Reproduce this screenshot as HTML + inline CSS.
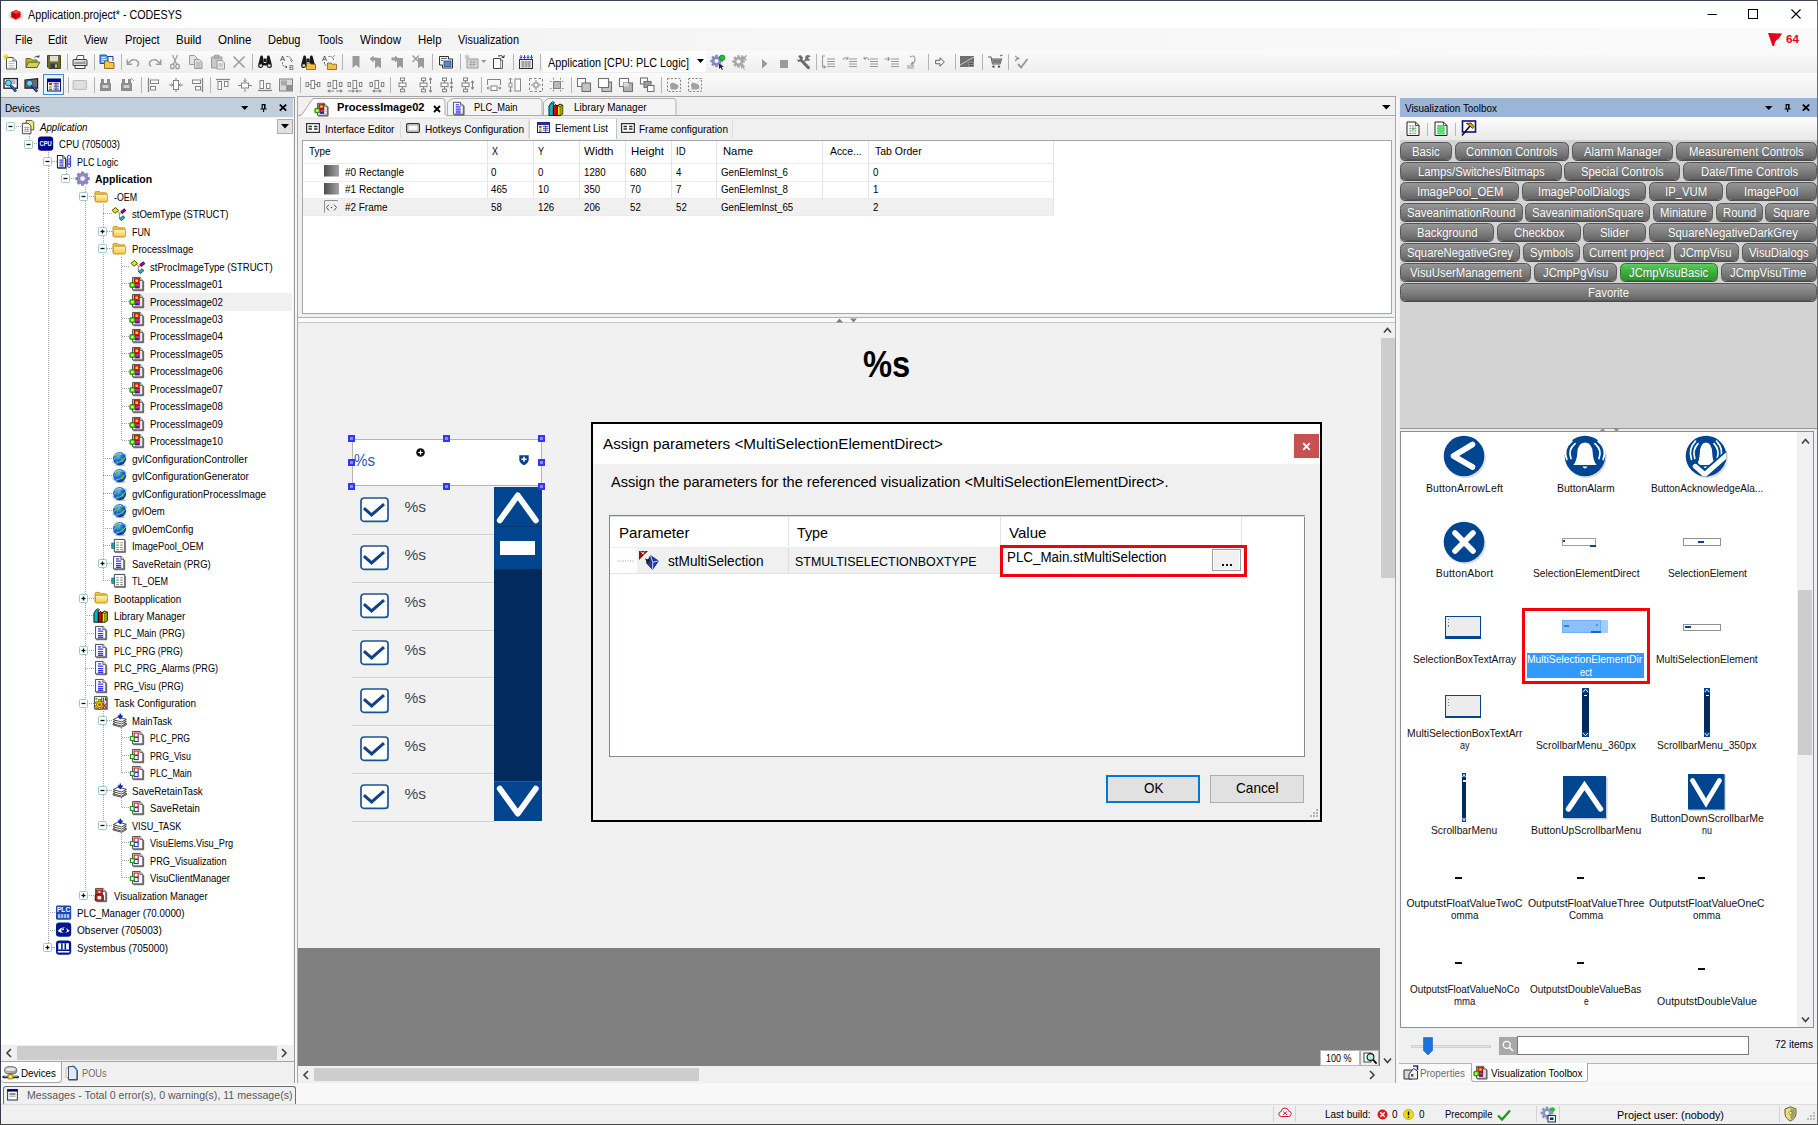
<!DOCTYPE html>
<html><head><meta charset="utf-8"><title>CODESYS</title>
<style>
html,body{margin:0;padding:0;}
body{width:1818px;height:1125px;overflow:hidden;background:#f6f6f6;position:relative;font-family:"Liberation Sans",sans-serif;}
div,span.t,svg{position:absolute;}
span.t{white-space:pre;transform-origin:0 50%;}
svg{overflow:visible;}
</style></head><body>
<div style="left:0px;top:0px;width:1818px;height:28px;background:#ffffff;"></div>
<svg style="left:8px;top:7px;" width="16" height="15" viewBox="0 0 16 15"><ellipse cx="8" cy="8.5" rx="7.5" ry="5" fill="#d9d9d9"/><path d="M8 3 L12.5 5 L12.5 10 L8 12.5 L3.5 10 L3.5 5 Z" fill="#d6000f"/><path d="M8 3 L12.5 5 L8 7 L3.5 5 Z" fill="#f04048"/><path d="M8 7 L8 12.5 L3.5 10 L3.5 5 Z" fill="#b4000c"/></svg>
<span class="t" style="left:27.50px;top:8px;font-size:12.5px;line-height:14px;color:#000;transform:scaleX(0.8591);">Application.project* - CODESYS</span>
<svg style="left:1707px;top:8.5px;" width="12" height="12" viewBox="0 0 12 12"><path d="M0.6 5.5 H9.8" stroke="#000" stroke-width="1" fill="none"/></svg>
<svg style="left:1748.4px;top:8.8px;" width="12" height="12" viewBox="0 0 12 12"><rect x="0.5" y="0.5" width="9" height="9" stroke="#000" stroke-width="1" fill="none"/></svg>
<svg style="left:1791px;top:8.8px;" width="12" height="12" viewBox="0 0 12 12"><path d="M0.5 0.5 L9.5 9.5 M9.5 0.5 L0.5 9.5" stroke="#000" stroke-width="1.1" fill="none"/></svg>
<div style="left:1px;top:28.2px;width:1816px;height:22.6px;background:linear-gradient(to right,#f0f0f0,#f5f5f5 35%,#fafafa);"></div>
<span class="t" style="left:14.50px;top:33px;font-size:12px;line-height:14px;color:#000;transform:scaleX(0.9050);">File</span>
<span class="t" style="left:48.00px;top:33px;font-size:12px;line-height:14px;color:#000;transform:scaleX(0.9188);">Edit</span>
<span class="t" style="left:84.00px;top:33px;font-size:12px;line-height:14px;color:#000;transform:scaleX(0.9111);">View</span>
<span class="t" style="left:124.50px;top:33px;font-size:12px;line-height:14px;color:#000;transform:scaleX(0.9237);">Project</span>
<span class="t" style="left:176.00px;top:33px;font-size:12px;line-height:14px;color:#000;transform:scaleX(0.9556);">Build</span>
<span class="t" style="left:218.00px;top:33px;font-size:12px;line-height:14px;color:#000;transform:scaleX(0.9657);">Online</span>
<span class="t" style="left:268.00px;top:33px;font-size:12px;line-height:14px;color:#000;transform:scaleX(0.9191);">Debug</span>
<span class="t" style="left:318.00px;top:33px;font-size:12px;line-height:14px;color:#000;transform:scaleX(0.8924);">Tools</span>
<span class="t" style="left:360.00px;top:33px;font-size:12px;line-height:14px;color:#000;transform:scaleX(0.9606);">Window</span>
<span class="t" style="left:417.50px;top:33px;font-size:12px;line-height:14px;color:#000;transform:scaleX(0.9522);">Help</span>
<span class="t" style="left:458.00px;top:33px;font-size:12px;line-height:14px;color:#000;transform:scaleX(0.9083);">Visualization</span>
<svg style="left:1767px;top:32px;" width="16" height="15" viewBox="0 0 16 15"><path d="M1 1 L15 1.5 L11.5 7 Q8 8 7 14 L5.5 14 Z" fill="#e8001c"/></svg>
<span class="t" style="left:1786.00px;top:33px;font-size:10.5px;line-height:12px;color:#e8001c;font-weight:700;transform:scaleX(1.1131);">64</span>
<div style="left:1px;top:50.8px;width:1816px;height:22.6px;background:linear-gradient(#fbfbfb,#eeeeee);"></div>
<div style="left:1px;top:73.4px;width:1816px;height:22.6px;background:linear-gradient(#fbfbfb,#efefef);"></div>
<div style="left:1px;top:96px;width:1816px;height:1px;background:#f0f0f0;"></div>
<div style="left:1px;top:97px;width:293px;height:988px;background:#f0f0f0;"></div>
<div style="left:1px;top:97.7px;width:292px;height:19.7px;background:#c1cfdd;"></div>
<span class="t" style="left:5.00px;top:102px;font-size:11px;line-height:12px;color:#000;transform:scaleX(0.8946);">Devices</span>
<div style="left:1px;top:118px;width:292px;height:927px;background:#ffffff;"></div>
<div style="left:293.6px;top:97px;width:1.2px;height:986px;background:#9c9c9c;"></div>
<div style="left:1px;top:97px;width:294px;height:1px;background:#a0a0a0;"></div>
<div style="left:297px;top:96.4px;width:1099px;height:987px;background:#f0f0f0;border:1px solid #a6a6a6;box-sizing:border-box;"></div>
<div style="left:1399.4px;top:97px;width:419px;height:986px;background:#f0f0f0;"></div>
<div style="left:1399.7px;top:97.6px;width:418px;height:19.4px;background:#9ab5d5;"></div>
<span class="t" style="left:1404.50px;top:102px;font-size:11px;line-height:12px;color:#000;transform:scaleX(0.8990);">Visualization Toolbox</span>
<div style="left:1px;top:1083.5px;width:1816px;height:20.8px;background:#f8f8f8;"></div>
<div style="left:1px;top:1104.3px;width:1816px;height:20.7px;background:#f0f0f0;"></div>
<svg style="left:0px;top:0px;" width="294" height="1000" viewBox="0 0 294 1000"><path d="M16.0 126.5 L21.0 126.5 M34.0 143.5 L39.0 143.5 M52.0 161.5 L57.0 161.5 M71.0 178.5 L75.0 178.5 M89.0 196.5 L94.0 196.5 M103.0 213.5 L112.0 213.5 M107.0 231.5 L112.0 231.5 M107.0 248.5 L112.0 248.5 M122.0 266.5 L130.0 266.5 M122.0 283.5 L130.0 283.5 M122.0 301.5 L130.0 301.5 M122.0 318.5 L130.0 318.5 M122.0 336.5 L130.0 336.5 M122.0 353.5 L130.0 353.5 M122.0 371.5 L130.0 371.5 M122.0 388.5 L130.0 388.5 M122.0 406.5 L130.0 406.5 M122.0 423.5 L130.0 423.5 M122.0 440.5 L130.0 440.5 M103.0 458.5 L112.0 458.5 M103.0 475.5 L112.0 475.5 M103.0 493.5 L112.0 493.5 M103.0 510.5 L112.0 510.5 M103.0 528.5 L112.0 528.5 M103.0 545.5 L112.0 545.5 M107.0 563.5 L112.0 563.5 M103.0 580.5 L112.0 580.5 M89.0 598.5 L94.0 598.5 M85.0 615.5 L94.0 615.5 M85.0 633.5 L94.0 633.5 M89.0 650.5 L94.0 650.5 M85.0 668.5 L94.0 668.5 M85.0 685.5 L94.0 685.5 M89.0 703.5 L94.0 703.5 M107.0 720.5 L112.0 720.5 M122.0 737.5 L130.0 737.5 M122.0 755.5 L130.0 755.5 M122.0 772.5 L130.0 772.5 M107.0 790.5 L112.0 790.5 M122.0 807.5 L130.0 807.5 M107.0 825.5 L112.0 825.5 M122.0 842.5 L130.0 842.5 M122.0 860.5 L130.0 860.5 M122.0 877.5 L130.0 877.5 M89.0 895.5 L94.0 895.5 M48.0 912.5 L57.0 912.5 M48.0 930.5 L57.0 930.5 M52.0 947.5 L57.0 947.5 M29.5 134.0 L29.5 144.0 M48.5 152.0 L48.5 948.0 M66.5 169.0 L66.5 179.0 M85.5 187.0 L85.5 895.0 M103.5 204.0 L103.5 581.0 M121.5 257.0 L121.5 441.0 M103.5 711.0 L103.5 825.0 M121.5 728.0 L121.5 773.0 M121.5 798.0 L121.5 808.0 M121.5 833.0 L121.5 878.0 " stroke="#a4a4a4" stroke-width="1" stroke-dasharray="1 1" fill="none"/></svg>
<svg style="left:6.0px;top:122.0px;" width="9" height="9" viewBox="0 0 9 9"><rect x="0.5" y="0.5" width="8" height="8" rx="1" fill="#fff" stroke="#9cc8cc" stroke-width="1"/><path d="M2.5 4.5 H6.5" stroke="#101010" stroke-width="1.3"/></svg>
<svg style="left:19.6px;top:118.7px;" width="15.2" height="15.2" viewBox="0 0 16 16"><path d="M6.5 1.5 H12.5 L14.5 3.5 V11.5 H6.5 Z" fill="#f4f070" stroke="#505040" stroke-width="1"/><path d="M2.5 4.5 H8.5 L11.5 7 V15.5 H2.5 Z" fill="#fff" stroke="#404040" stroke-width="1"/><path d="M4 9 H10 M4 11 H10 M4 13 H10 M6 8 V14 M8 8 V14" stroke="#a0a0a0" stroke-width="0.8"/></svg>
<span class="t" style="left:40.20px;top:121px;font-size:11px;line-height:12px;color:#000;font-style:italic;transform:scaleX(0.8820);">Application</span>
<svg style="left:24.4px;top:139.5px;" width="9" height="9" viewBox="0 0 9 9"><rect x="0.5" y="0.5" width="8" height="8" rx="1" fill="#fff" stroke="#9cc8cc" stroke-width="1"/><path d="M2.5 4.5 H6.5" stroke="#101010" stroke-width="1.3"/></svg>
<svg style="left:38.0px;top:136.2px;" width="15.2" height="15.2" viewBox="0 0 16 16"><rect x="0" y="0.5" width="16" height="15" rx="3.5" fill="#00008c"/><text x="8" y="11" font-size="7.5" font-weight="700" fill="#fff" text-anchor="middle" font-family="Liberation Sans" textLength="13" lengthAdjust="spacingAndGlyphs">CPU</text></svg>
<span class="t" style="left:58.55px;top:138px;font-size:11px;line-height:12px;color:#000;transform:scaleX(0.8675);">CPU (705003)</span>
<svg style="left:42.7px;top:156.9px;" width="9" height="9" viewBox="0 0 9 9"><rect x="0.5" y="0.5" width="8" height="8" rx="1" fill="#fff" stroke="#9cc8cc" stroke-width="1"/><path d="M2.5 4.5 H6.5" stroke="#101010" stroke-width="1.3"/></svg>
<svg style="left:56.3px;top:153.6px;" width="15.2" height="15.2" viewBox="0 0 16 16"><path d="M1.5 1.5 H7 L10 4.5 V14.5 H1.5 Z" fill="#fff" stroke="#202020" stroke-width="1.1"/><path d="M7 1.5 V4.5 H10" fill="#ddd" stroke="#202020" stroke-width="0.8"/><path d="M2 15.3 H10.8 V5" stroke="#505050" stroke-width="0.9" fill="none"/><path d="M3.5 6.5 H8 M3.5 8.5 H8 M3.5 10.5 H8 M3.5 12.5 H8" stroke="#3838e8" stroke-width="1.2"/><path d="M12.2 2 Q14 1 15.4 2 V13.5 Q14 14.8 12.2 13.5 Z" fill="#fff" stroke="#2828f0" stroke-width="1"/><path d="M13.8 4 V11 M12.6 9.8 L13.8 11.6 L15 9.8" stroke="#2828f0" stroke-width="0.9" fill="none"/></svg>
<span class="t" style="left:76.90px;top:156px;font-size:11px;line-height:12px;color:#000;transform:scaleX(0.8118);">PLC Logic</span>
<svg style="left:61.1px;top:174.4px;" width="9" height="9" viewBox="0 0 9 9"><rect x="0.5" y="0.5" width="8" height="8" rx="1" fill="#fff" stroke="#9cc8cc" stroke-width="1"/><path d="M2.5 4.5 H6.5" stroke="#101010" stroke-width="1.3"/></svg>
<svg style="left:74.7px;top:171.1px;" width="15.2" height="15.2" viewBox="0 0 16 16"><g transform="translate(8,8)"><g fill="#8c8cc4"><rect x="-1.7" y="-7.6" width="3.4" height="4" rx="0.6" transform="rotate(0)"/><rect x="-1.7" y="-7.6" width="3.4" height="4" rx="0.6" transform="rotate(45)"/><rect x="-1.7" y="-7.6" width="3.4" height="4" rx="0.6" transform="rotate(90)"/><rect x="-1.7" y="-7.6" width="3.4" height="4" rx="0.6" transform="rotate(135)"/><rect x="-1.7" y="-7.6" width="3.4" height="4" rx="0.6" transform="rotate(180)"/><rect x="-1.7" y="-7.6" width="3.4" height="4" rx="0.6" transform="rotate(225)"/><rect x="-1.7" y="-7.6" width="3.4" height="4" rx="0.6" transform="rotate(270)"/><rect x="-1.7" y="-7.6" width="3.4" height="4" rx="0.6" transform="rotate(315)"/></g><circle r="5.6" fill="#8c8cc4"/><circle r="5.6" fill="none" stroke="#7070a8" stroke-width="0.6"/><circle r="2.9" fill="#f4f4fa" stroke="#7a7ab0" stroke-width="0.7"/></g></svg>
<span class="t" style="left:95.25px;top:173px;font-size:11px;line-height:12px;color:#000;font-weight:700;transform:scaleX(0.9550);">Application</span>
<svg style="left:79.4px;top:191.9px;" width="9" height="9" viewBox="0 0 9 9"><rect x="0.5" y="0.5" width="8" height="8" rx="1" fill="#fff" stroke="#9cc8cc" stroke-width="1"/><path d="M2.5 4.5 H6.5" stroke="#101010" stroke-width="1.3"/></svg>
<svg style="left:93.0px;top:188.6px;" width="15.2" height="15.2" viewBox="0 0 16 16"><g transform="translate(1.1,0) scale(0.95,1)"><defs><linearGradient id="fg" x1="0" y1="0" x2="0" y2="1"><stop offset="0" stop-color="#fff6b8"/><stop offset="1" stop-color="#f2c64c"/></linearGradient></defs><path d="M1 4.2 Q1 2.5 2.6 2.5 H6 L7.5 4 H13 Q14.5 4 14.5 5.5 V12 Q14.5 13.5 13 13.5 H2.5 Q1 13.5 1 12 Z" fill="#f0c040" stroke="#c08c20" stroke-width="0.9"/><path d="M1.6 6.6 Q1.6 5.6 2.8 5.6 H13.8 Q15 5.6 15 6.8 V12 Q15 13.5 13.5 13.5 H3 Q1.6 13.5 1.6 12 Z" fill="url(#fg)" stroke="#c89828" stroke-width="0.9"/></g></svg>
<span class="t" style="left:113.60px;top:191px;font-size:11px;line-height:12px;color:#000;transform:scaleX(0.8008);">-OEM</span>
<svg style="left:111.3px;top:206.1px;" width="15.2" height="15.2" viewBox="0 0 16 16"><g transform="translate(0.3,1.1)"><path d="M6.6 4.6 L8.6 6.4 V12 L10 12.4 M8.6 7.4 L10.8 6" stroke="#909090" stroke-width="1.1" fill="none"/><path d="M0.8 3.4 L4.6 0.5 L7.6 3.6 L3.8 6.6 Z" fill="#e8e800" stroke="#303000" stroke-width="0.9"/><path d="M10 4.6 L13.8 1.8 L15.4 4 L11.6 6.9 Z" fill="#b00078" stroke="#300020" stroke-width="0.8"/><path d="M8.8 12 L12.6 9.2 L14.2 11.4 L10.4 14.3 Z" fill="#28b8c0" stroke="#083c40" stroke-width="0.8"/></g></svg>
<span class="t" style="left:131.95px;top:208px;font-size:11px;line-height:12px;color:#000;transform:scaleX(0.8675);">stOemType (STRUCT)</span>
<svg style="left:97.8px;top:226.8px;" width="9" height="9" viewBox="0 0 9 9"><rect x="0.5" y="0.5" width="8" height="8" rx="1" fill="#fff" stroke="#9cc8cc" stroke-width="1"/><path d="M2.5 4.5 H6.5" stroke="#101010" stroke-width="1.3"/><path d="M4.5 2.5 V6.5" stroke="#101010" stroke-width="1.3"/></svg>
<svg style="left:111.3px;top:223.5px;" width="15.2" height="15.2" viewBox="0 0 16 16"><g transform="translate(1.1,0) scale(0.95,1)"><defs><linearGradient id="fg" x1="0" y1="0" x2="0" y2="1"><stop offset="0" stop-color="#fff6b8"/><stop offset="1" stop-color="#f2c64c"/></linearGradient></defs><path d="M1 4.2 Q1 2.5 2.6 2.5 H6 L7.5 4 H13 Q14.5 4 14.5 5.5 V12 Q14.5 13.5 13 13.5 H2.5 Q1 13.5 1 12 Z" fill="#f0c040" stroke="#c08c20" stroke-width="0.9"/><path d="M1.6 6.6 Q1.6 5.6 2.8 5.6 H13.8 Q15 5.6 15 6.8 V12 Q15 13.5 13.5 13.5 H3 Q1.6 13.5 1.6 12 Z" fill="url(#fg)" stroke="#c89828" stroke-width="0.9"/></g></svg>
<span class="t" style="left:131.95px;top:226px;font-size:11px;line-height:12px;color:#000;transform:scaleX(0.8095);">FUN</span>
<svg style="left:97.8px;top:244.3px;" width="9" height="9" viewBox="0 0 9 9"><rect x="0.5" y="0.5" width="8" height="8" rx="1" fill="#fff" stroke="#9cc8cc" stroke-width="1"/><path d="M2.5 4.5 H6.5" stroke="#101010" stroke-width="1.3"/></svg>
<svg style="left:111.3px;top:241.0px;" width="15.2" height="15.2" viewBox="0 0 16 16"><g transform="translate(1.1,0) scale(0.95,1)"><defs><linearGradient id="fg" x1="0" y1="0" x2="0" y2="1"><stop offset="0" stop-color="#fff6b8"/><stop offset="1" stop-color="#f2c64c"/></linearGradient></defs><path d="M1 4.2 Q1 2.5 2.6 2.5 H6 L7.5 4 H13 Q14.5 4 14.5 5.5 V12 Q14.5 13.5 13 13.5 H2.5 Q1 13.5 1 12 Z" fill="#f0c040" stroke="#c08c20" stroke-width="0.9"/><path d="M1.6 6.6 Q1.6 5.6 2.8 5.6 H13.8 Q15 5.6 15 6.8 V12 Q15 13.5 13.5 13.5 H3 Q1.6 13.5 1.6 12 Z" fill="url(#fg)" stroke="#c89828" stroke-width="0.9"/></g></svg>
<span class="t" style="left:131.95px;top:243px;font-size:11px;line-height:12px;color:#000;transform:scaleX(0.8719);">ProcessImage</span>
<svg style="left:129.7px;top:258.5px;" width="15.2" height="15.2" viewBox="0 0 16 16"><g transform="translate(0.3,1.1)"><path d="M6.6 4.6 L8.6 6.4 V12 L10 12.4 M8.6 7.4 L10.8 6" stroke="#909090" stroke-width="1.1" fill="none"/><path d="M0.8 3.4 L4.6 0.5 L7.6 3.6 L3.8 6.6 Z" fill="#e8e800" stroke="#303000" stroke-width="0.9"/><path d="M10 4.6 L13.8 1.8 L15.4 4 L11.6 6.9 Z" fill="#b00078" stroke="#300020" stroke-width="0.8"/><path d="M8.8 12 L12.6 9.2 L14.2 11.4 L10.4 14.3 Z" fill="#28b8c0" stroke="#083c40" stroke-width="0.8"/></g></svg>
<span class="t" style="left:150.30px;top:261px;font-size:11px;line-height:12px;color:#000;transform:scaleX(0.8721);">stProcImageType (STRUCT)</span>
<svg style="left:129.7px;top:275.9px;" width="15.2" height="15.2" viewBox="0 0 16 16"><path d="M2.7 1.5 H10.4 L13.5 4.6 V14.6 H2.7 Z" fill="#fff" stroke="#303030" stroke-width="0.9"/><path d="M10.4 1.5 V4.6 H13.5" fill="#e4e4e4" stroke="#303030" stroke-width="0.8"/><path d="M3.4 15.5 H14.4 V5.4" stroke="#505050" stroke-width="1" fill="none"/><g transform="translate(-0.8,0)"><path d="M11 6.5 H13 M11 8.5 H13 M11 10.5 H13 M6 13 H13" stroke="#b8b8b8" stroke-width=".8"/><rect x="5" y="2.6" width="5.6" height="5.2" fill="#e01818" stroke="#700000" stroke-width="0.6"/><rect x="6.6" y="3.8" width="2.6" height="2.4" fill="#ffe820"/><rect x="6.6" y="7.8" width="4" height="4.8" fill="#e8207c" stroke="#600030" stroke-width="0.6"/><rect x="6.6" y="11" width="4" height="1.6" fill="#2020c0"/><rect x="0.6" y="7" width="5.6" height="5" rx="0.8" fill="#38c820" stroke="#186000" stroke-width="0.7"/><rect x="2" y="8.2" width="2.6" height="2.6" fill="#f4f440"/></g></svg>
<span class="t" style="left:150.30px;top:278px;font-size:11px;line-height:12px;color:#000;transform:scaleX(0.8819);">ProcessImage01</span>
<div style="left:131.3px;top:293.2px;width:160.7px;height:17.5px;background:#f0f0f0;"></div>
<svg style="left:129.7px;top:293.4px;" width="15.2" height="15.2" viewBox="0 0 16 16"><path d="M2.7 1.5 H10.4 L13.5 4.6 V14.6 H2.7 Z" fill="#fff" stroke="#303030" stroke-width="0.9"/><path d="M10.4 1.5 V4.6 H13.5" fill="#e4e4e4" stroke="#303030" stroke-width="0.8"/><path d="M3.4 15.5 H14.4 V5.4" stroke="#505050" stroke-width="1" fill="none"/><g transform="translate(-0.8,0)"><path d="M11 6.5 H13 M11 8.5 H13 M11 10.5 H13 M6 13 H13" stroke="#b8b8b8" stroke-width=".8"/><rect x="5" y="2.6" width="5.6" height="5.2" fill="#e01818" stroke="#700000" stroke-width="0.6"/><rect x="6.6" y="3.8" width="2.6" height="2.4" fill="#ffe820"/><rect x="6.6" y="7.8" width="4" height="4.8" fill="#e8207c" stroke="#600030" stroke-width="0.6"/><rect x="6.6" y="11" width="4" height="1.6" fill="#2020c0"/><rect x="0.6" y="7" width="5.6" height="5" rx="0.8" fill="#38c820" stroke="#186000" stroke-width="0.7"/><rect x="2" y="8.2" width="2.6" height="2.6" fill="#f4f440"/></g></svg>
<span class="t" style="left:150.30px;top:296px;font-size:11px;line-height:12px;color:#000;transform:scaleX(0.8819);">ProcessImage02</span>
<svg style="left:129.7px;top:310.9px;" width="15.2" height="15.2" viewBox="0 0 16 16"><path d="M2.7 1.5 H10.4 L13.5 4.6 V14.6 H2.7 Z" fill="#fff" stroke="#303030" stroke-width="0.9"/><path d="M10.4 1.5 V4.6 H13.5" fill="#e4e4e4" stroke="#303030" stroke-width="0.8"/><path d="M3.4 15.5 H14.4 V5.4" stroke="#505050" stroke-width="1" fill="none"/><g transform="translate(-0.8,0)"><path d="M11 6.5 H13 M11 8.5 H13 M11 10.5 H13 M6 13 H13" stroke="#b8b8b8" stroke-width=".8"/><rect x="5" y="2.6" width="5.6" height="5.2" fill="#e01818" stroke="#700000" stroke-width="0.6"/><rect x="6.6" y="3.8" width="2.6" height="2.4" fill="#ffe820"/><rect x="6.6" y="7.8" width="4" height="4.8" fill="#e8207c" stroke="#600030" stroke-width="0.6"/><rect x="6.6" y="11" width="4" height="1.6" fill="#2020c0"/><rect x="0.6" y="7" width="5.6" height="5" rx="0.8" fill="#38c820" stroke="#186000" stroke-width="0.7"/><rect x="2" y="8.2" width="2.6" height="2.6" fill="#f4f440"/></g></svg>
<span class="t" style="left:150.30px;top:313px;font-size:11px;line-height:12px;color:#000;transform:scaleX(0.8819);">ProcessImage03</span>
<svg style="left:129.7px;top:328.3px;" width="15.2" height="15.2" viewBox="0 0 16 16"><path d="M2.7 1.5 H10.4 L13.5 4.6 V14.6 H2.7 Z" fill="#fff" stroke="#303030" stroke-width="0.9"/><path d="M10.4 1.5 V4.6 H13.5" fill="#e4e4e4" stroke="#303030" stroke-width="0.8"/><path d="M3.4 15.5 H14.4 V5.4" stroke="#505050" stroke-width="1" fill="none"/><g transform="translate(-0.8,0)"><path d="M11 6.5 H13 M11 8.5 H13 M11 10.5 H13 M6 13 H13" stroke="#b8b8b8" stroke-width=".8"/><rect x="5" y="2.6" width="5.6" height="5.2" fill="#e01818" stroke="#700000" stroke-width="0.6"/><rect x="6.6" y="3.8" width="2.6" height="2.4" fill="#ffe820"/><rect x="6.6" y="7.8" width="4" height="4.8" fill="#e8207c" stroke="#600030" stroke-width="0.6"/><rect x="6.6" y="11" width="4" height="1.6" fill="#2020c0"/><rect x="0.6" y="7" width="5.6" height="5" rx="0.8" fill="#38c820" stroke="#186000" stroke-width="0.7"/><rect x="2" y="8.2" width="2.6" height="2.6" fill="#f4f440"/></g></svg>
<span class="t" style="left:150.30px;top:330px;font-size:11px;line-height:12px;color:#000;transform:scaleX(0.8819);">ProcessImage04</span>
<svg style="left:129.7px;top:345.8px;" width="15.2" height="15.2" viewBox="0 0 16 16"><path d="M2.7 1.5 H10.4 L13.5 4.6 V14.6 H2.7 Z" fill="#fff" stroke="#303030" stroke-width="0.9"/><path d="M10.4 1.5 V4.6 H13.5" fill="#e4e4e4" stroke="#303030" stroke-width="0.8"/><path d="M3.4 15.5 H14.4 V5.4" stroke="#505050" stroke-width="1" fill="none"/><g transform="translate(-0.8,0)"><path d="M11 6.5 H13 M11 8.5 H13 M11 10.5 H13 M6 13 H13" stroke="#b8b8b8" stroke-width=".8"/><rect x="5" y="2.6" width="5.6" height="5.2" fill="#e01818" stroke="#700000" stroke-width="0.6"/><rect x="6.6" y="3.8" width="2.6" height="2.4" fill="#ffe820"/><rect x="6.6" y="7.8" width="4" height="4.8" fill="#e8207c" stroke="#600030" stroke-width="0.6"/><rect x="6.6" y="11" width="4" height="1.6" fill="#2020c0"/><rect x="0.6" y="7" width="5.6" height="5" rx="0.8" fill="#38c820" stroke="#186000" stroke-width="0.7"/><rect x="2" y="8.2" width="2.6" height="2.6" fill="#f4f440"/></g></svg>
<span class="t" style="left:150.30px;top:348px;font-size:11px;line-height:12px;color:#000;transform:scaleX(0.8819);">ProcessImage05</span>
<svg style="left:129.7px;top:363.3px;" width="15.2" height="15.2" viewBox="0 0 16 16"><path d="M2.7 1.5 H10.4 L13.5 4.6 V14.6 H2.7 Z" fill="#fff" stroke="#303030" stroke-width="0.9"/><path d="M10.4 1.5 V4.6 H13.5" fill="#e4e4e4" stroke="#303030" stroke-width="0.8"/><path d="M3.4 15.5 H14.4 V5.4" stroke="#505050" stroke-width="1" fill="none"/><g transform="translate(-0.8,0)"><path d="M11 6.5 H13 M11 8.5 H13 M11 10.5 H13 M6 13 H13" stroke="#b8b8b8" stroke-width=".8"/><rect x="5" y="2.6" width="5.6" height="5.2" fill="#e01818" stroke="#700000" stroke-width="0.6"/><rect x="6.6" y="3.8" width="2.6" height="2.4" fill="#ffe820"/><rect x="6.6" y="7.8" width="4" height="4.8" fill="#e8207c" stroke="#600030" stroke-width="0.6"/><rect x="6.6" y="11" width="4" height="1.6" fill="#2020c0"/><rect x="0.6" y="7" width="5.6" height="5" rx="0.8" fill="#38c820" stroke="#186000" stroke-width="0.7"/><rect x="2" y="8.2" width="2.6" height="2.6" fill="#f4f440"/></g></svg>
<span class="t" style="left:150.30px;top:365px;font-size:11px;line-height:12px;color:#000;transform:scaleX(0.8819);">ProcessImage06</span>
<svg style="left:129.7px;top:380.7px;" width="15.2" height="15.2" viewBox="0 0 16 16"><path d="M2.7 1.5 H10.4 L13.5 4.6 V14.6 H2.7 Z" fill="#fff" stroke="#303030" stroke-width="0.9"/><path d="M10.4 1.5 V4.6 H13.5" fill="#e4e4e4" stroke="#303030" stroke-width="0.8"/><path d="M3.4 15.5 H14.4 V5.4" stroke="#505050" stroke-width="1" fill="none"/><g transform="translate(-0.8,0)"><path d="M11 6.5 H13 M11 8.5 H13 M11 10.5 H13 M6 13 H13" stroke="#b8b8b8" stroke-width=".8"/><rect x="5" y="2.6" width="5.6" height="5.2" fill="#e01818" stroke="#700000" stroke-width="0.6"/><rect x="6.6" y="3.8" width="2.6" height="2.4" fill="#ffe820"/><rect x="6.6" y="7.8" width="4" height="4.8" fill="#e8207c" stroke="#600030" stroke-width="0.6"/><rect x="6.6" y="11" width="4" height="1.6" fill="#2020c0"/><rect x="0.6" y="7" width="5.6" height="5" rx="0.8" fill="#38c820" stroke="#186000" stroke-width="0.7"/><rect x="2" y="8.2" width="2.6" height="2.6" fill="#f4f440"/></g></svg>
<span class="t" style="left:150.30px;top:383px;font-size:11px;line-height:12px;color:#000;transform:scaleX(0.8819);">ProcessImage07</span>
<svg style="left:129.7px;top:398.2px;" width="15.2" height="15.2" viewBox="0 0 16 16"><path d="M2.7 1.5 H10.4 L13.5 4.6 V14.6 H2.7 Z" fill="#fff" stroke="#303030" stroke-width="0.9"/><path d="M10.4 1.5 V4.6 H13.5" fill="#e4e4e4" stroke="#303030" stroke-width="0.8"/><path d="M3.4 15.5 H14.4 V5.4" stroke="#505050" stroke-width="1" fill="none"/><g transform="translate(-0.8,0)"><path d="M11 6.5 H13 M11 8.5 H13 M11 10.5 H13 M6 13 H13" stroke="#b8b8b8" stroke-width=".8"/><rect x="5" y="2.6" width="5.6" height="5.2" fill="#e01818" stroke="#700000" stroke-width="0.6"/><rect x="6.6" y="3.8" width="2.6" height="2.4" fill="#ffe820"/><rect x="6.6" y="7.8" width="4" height="4.8" fill="#e8207c" stroke="#600030" stroke-width="0.6"/><rect x="6.6" y="11" width="4" height="1.6" fill="#2020c0"/><rect x="0.6" y="7" width="5.6" height="5" rx="0.8" fill="#38c820" stroke="#186000" stroke-width="0.7"/><rect x="2" y="8.2" width="2.6" height="2.6" fill="#f4f440"/></g></svg>
<span class="t" style="left:150.30px;top:400px;font-size:11px;line-height:12px;color:#000;transform:scaleX(0.8819);">ProcessImage08</span>
<svg style="left:129.7px;top:415.7px;" width="15.2" height="15.2" viewBox="0 0 16 16"><path d="M2.7 1.5 H10.4 L13.5 4.6 V14.6 H2.7 Z" fill="#fff" stroke="#303030" stroke-width="0.9"/><path d="M10.4 1.5 V4.6 H13.5" fill="#e4e4e4" stroke="#303030" stroke-width="0.8"/><path d="M3.4 15.5 H14.4 V5.4" stroke="#505050" stroke-width="1" fill="none"/><g transform="translate(-0.8,0)"><path d="M11 6.5 H13 M11 8.5 H13 M11 10.5 H13 M6 13 H13" stroke="#b8b8b8" stroke-width=".8"/><rect x="5" y="2.6" width="5.6" height="5.2" fill="#e01818" stroke="#700000" stroke-width="0.6"/><rect x="6.6" y="3.8" width="2.6" height="2.4" fill="#ffe820"/><rect x="6.6" y="7.8" width="4" height="4.8" fill="#e8207c" stroke="#600030" stroke-width="0.6"/><rect x="6.6" y="11" width="4" height="1.6" fill="#2020c0"/><rect x="0.6" y="7" width="5.6" height="5" rx="0.8" fill="#38c820" stroke="#186000" stroke-width="0.7"/><rect x="2" y="8.2" width="2.6" height="2.6" fill="#f4f440"/></g></svg>
<span class="t" style="left:150.30px;top:418px;font-size:11px;line-height:12px;color:#000;transform:scaleX(0.8819);">ProcessImage09</span>
<svg style="left:129.7px;top:433.2px;" width="15.2" height="15.2" viewBox="0 0 16 16"><path d="M2.7 1.5 H10.4 L13.5 4.6 V14.6 H2.7 Z" fill="#fff" stroke="#303030" stroke-width="0.9"/><path d="M10.4 1.5 V4.6 H13.5" fill="#e4e4e4" stroke="#303030" stroke-width="0.8"/><path d="M3.4 15.5 H14.4 V5.4" stroke="#505050" stroke-width="1" fill="none"/><g transform="translate(-0.8,0)"><path d="M11 6.5 H13 M11 8.5 H13 M11 10.5 H13 M6 13 H13" stroke="#b8b8b8" stroke-width=".8"/><rect x="5" y="2.6" width="5.6" height="5.2" fill="#e01818" stroke="#700000" stroke-width="0.6"/><rect x="6.6" y="3.8" width="2.6" height="2.4" fill="#ffe820"/><rect x="6.6" y="7.8" width="4" height="4.8" fill="#e8207c" stroke="#600030" stroke-width="0.6"/><rect x="6.6" y="11" width="4" height="1.6" fill="#2020c0"/><rect x="0.6" y="7" width="5.6" height="5" rx="0.8" fill="#38c820" stroke="#186000" stroke-width="0.7"/><rect x="2" y="8.2" width="2.6" height="2.6" fill="#f4f440"/></g></svg>
<span class="t" style="left:150.30px;top:435px;font-size:11px;line-height:12px;color:#000;transform:scaleX(0.8819);">ProcessImage10</span>
<svg style="left:111.3px;top:450.6px;" width="15.2" height="15.2" viewBox="0 0 16 16"><g transform="translate(1,0)"><defs><radialGradient id="gg" cx="0.36" cy="0.3" r="0.8"><stop offset="0" stop-color="#8ccaff"/><stop offset="0.4" stop-color="#1c6ce0"/><stop offset="1" stop-color="#08288c"/></radialGradient></defs><ellipse cx="8.8" cy="14.8" rx="5.6" ry="1.2" fill="#a0a0a0" opacity="0.7"/><circle cx="8" cy="8" r="7" fill="url(#gg)"/><path d="M3.4 4 Q5.6 1.8 8.2 2.2 Q9.4 3.8 7.6 5 Q6.4 5.4 6.2 7 Q4.8 8.2 3.2 7 Q2.4 5.6 3.4 4 Z" fill="#30a830"/><path d="M8.8 7.4 Q11.2 6.2 13 7.8 Q13.4 10.4 11.4 12.2 Q9.6 12 9.4 10 Q8.2 9 8.8 7.4 Z" fill="#2c9c2c"/><path d="M4.6 10.4 Q6 10 6.6 11.4 Q6 13 4.8 12.4 Z" fill="#3cb03c"/><ellipse cx="8" cy="8" rx="8" ry="3.2" transform="rotate(-32 8 8)" fill="none" stroke="#7cc0ff" stroke-width="0.9"/><path d="M3 5 Q6 2.4 9.6 2.6" stroke="#e8f6ff" stroke-width="0.9" fill="none" opacity="0.9"/></g></svg>
<span class="t" style="left:131.95px;top:453px;font-size:11px;line-height:12px;color:#000;transform:scaleX(0.9082);">gvlConfigurationController</span>
<svg style="left:111.3px;top:468.1px;" width="15.2" height="15.2" viewBox="0 0 16 16"><g transform="translate(1,0)"><defs><radialGradient id="gg" cx="0.36" cy="0.3" r="0.8"><stop offset="0" stop-color="#8ccaff"/><stop offset="0.4" stop-color="#1c6ce0"/><stop offset="1" stop-color="#08288c"/></radialGradient></defs><ellipse cx="8.8" cy="14.8" rx="5.6" ry="1.2" fill="#a0a0a0" opacity="0.7"/><circle cx="8" cy="8" r="7" fill="url(#gg)"/><path d="M3.4 4 Q5.6 1.8 8.2 2.2 Q9.4 3.8 7.6 5 Q6.4 5.4 6.2 7 Q4.8 8.2 3.2 7 Q2.4 5.6 3.4 4 Z" fill="#30a830"/><path d="M8.8 7.4 Q11.2 6.2 13 7.8 Q13.4 10.4 11.4 12.2 Q9.6 12 9.4 10 Q8.2 9 8.8 7.4 Z" fill="#2c9c2c"/><path d="M4.6 10.4 Q6 10 6.6 11.4 Q6 13 4.8 12.4 Z" fill="#3cb03c"/><ellipse cx="8" cy="8" rx="8" ry="3.2" transform="rotate(-32 8 8)" fill="none" stroke="#7cc0ff" stroke-width="0.9"/><path d="M3 5 Q6 2.4 9.6 2.6" stroke="#e8f6ff" stroke-width="0.9" fill="none" opacity="0.9"/></g></svg>
<span class="t" style="left:131.95px;top:470px;font-size:11px;line-height:12px;color:#000;transform:scaleX(0.9053);">gvlConfigurationGenerator</span>
<svg style="left:111.3px;top:485.6px;" width="15.2" height="15.2" viewBox="0 0 16 16"><g transform="translate(1,0)"><defs><radialGradient id="gg" cx="0.36" cy="0.3" r="0.8"><stop offset="0" stop-color="#8ccaff"/><stop offset="0.4" stop-color="#1c6ce0"/><stop offset="1" stop-color="#08288c"/></radialGradient></defs><ellipse cx="8.8" cy="14.8" rx="5.6" ry="1.2" fill="#a0a0a0" opacity="0.7"/><circle cx="8" cy="8" r="7" fill="url(#gg)"/><path d="M3.4 4 Q5.6 1.8 8.2 2.2 Q9.4 3.8 7.6 5 Q6.4 5.4 6.2 7 Q4.8 8.2 3.2 7 Q2.4 5.6 3.4 4 Z" fill="#30a830"/><path d="M8.8 7.4 Q11.2 6.2 13 7.8 Q13.4 10.4 11.4 12.2 Q9.6 12 9.4 10 Q8.2 9 8.8 7.4 Z" fill="#2c9c2c"/><path d="M4.6 10.4 Q6 10 6.6 11.4 Q6 13 4.8 12.4 Z" fill="#3cb03c"/><ellipse cx="8" cy="8" rx="8" ry="3.2" transform="rotate(-32 8 8)" fill="none" stroke="#7cc0ff" stroke-width="0.9"/><path d="M3 5 Q6 2.4 9.6 2.6" stroke="#e8f6ff" stroke-width="0.9" fill="none" opacity="0.9"/></g></svg>
<span class="t" style="left:131.95px;top:488px;font-size:11px;line-height:12px;color:#000;transform:scaleX(0.8938);">gvlConfigurationProcessImage</span>
<svg style="left:111.3px;top:503.0px;" width="15.2" height="15.2" viewBox="0 0 16 16"><g transform="translate(1,0)"><defs><radialGradient id="gg" cx="0.36" cy="0.3" r="0.8"><stop offset="0" stop-color="#8ccaff"/><stop offset="0.4" stop-color="#1c6ce0"/><stop offset="1" stop-color="#08288c"/></radialGradient></defs><ellipse cx="8.8" cy="14.8" rx="5.6" ry="1.2" fill="#a0a0a0" opacity="0.7"/><circle cx="8" cy="8" r="7" fill="url(#gg)"/><path d="M3.4 4 Q5.6 1.8 8.2 2.2 Q9.4 3.8 7.6 5 Q6.4 5.4 6.2 7 Q4.8 8.2 3.2 7 Q2.4 5.6 3.4 4 Z" fill="#30a830"/><path d="M8.8 7.4 Q11.2 6.2 13 7.8 Q13.4 10.4 11.4 12.2 Q9.6 12 9.4 10 Q8.2 9 8.8 7.4 Z" fill="#2c9c2c"/><path d="M4.6 10.4 Q6 10 6.6 11.4 Q6 13 4.8 12.4 Z" fill="#3cb03c"/><ellipse cx="8" cy="8" rx="8" ry="3.2" transform="rotate(-32 8 8)" fill="none" stroke="#7cc0ff" stroke-width="0.9"/><path d="M3 5 Q6 2.4 9.6 2.6" stroke="#e8f6ff" stroke-width="0.9" fill="none" opacity="0.9"/></g></svg>
<span class="t" style="left:131.95px;top:505px;font-size:11px;line-height:12px;color:#000;transform:scaleX(0.8655);">gvlOem</span>
<svg style="left:111.3px;top:520.5px;" width="15.2" height="15.2" viewBox="0 0 16 16"><g transform="translate(1,0)"><defs><radialGradient id="gg" cx="0.36" cy="0.3" r="0.8"><stop offset="0" stop-color="#8ccaff"/><stop offset="0.4" stop-color="#1c6ce0"/><stop offset="1" stop-color="#08288c"/></radialGradient></defs><ellipse cx="8.8" cy="14.8" rx="5.6" ry="1.2" fill="#a0a0a0" opacity="0.7"/><circle cx="8" cy="8" r="7" fill="url(#gg)"/><path d="M3.4 4 Q5.6 1.8 8.2 2.2 Q9.4 3.8 7.6 5 Q6.4 5.4 6.2 7 Q4.8 8.2 3.2 7 Q2.4 5.6 3.4 4 Z" fill="#30a830"/><path d="M8.8 7.4 Q11.2 6.2 13 7.8 Q13.4 10.4 11.4 12.2 Q9.6 12 9.4 10 Q8.2 9 8.8 7.4 Z" fill="#2c9c2c"/><path d="M4.6 10.4 Q6 10 6.6 11.4 Q6 13 4.8 12.4 Z" fill="#3cb03c"/><ellipse cx="8" cy="8" rx="8" ry="3.2" transform="rotate(-32 8 8)" fill="none" stroke="#7cc0ff" stroke-width="0.9"/><path d="M3 5 Q6 2.4 9.6 2.6" stroke="#e8f6ff" stroke-width="0.9" fill="none" opacity="0.9"/></g></svg>
<span class="t" style="left:131.95px;top:523px;font-size:11px;line-height:12px;color:#000;transform:scaleX(0.8795);">gvlOemConfig</span>
<svg style="left:111.3px;top:538.0px;" width="15.2" height="15.2" viewBox="0 0 16 16"><path d="M3.5 1.5 H14.5 V14.5 H3.5 Z" fill="#fff" stroke="#404040" stroke-width="1"/><path d="M4 15.3 H15.3 V3" stroke="#707070" stroke-width="0.9" fill="none"/><path d="M5.5 5 H8.3 M9.7 5 H12.5 M5.5 7.5 H8.3 M9.7 7.5 H12.5 M5.5 10 H8.3 M9.7 10 H12.5 M5.5 12.2 H8.3 M9.7 12.2 H12.5" stroke="#909090" stroke-width="1.3"/><rect x="0.8" y="5.3" width="3" height="5.6" fill="#20a0a0" stroke="#106868" stroke-width="0.7"/></svg>
<span class="t" style="left:131.95px;top:540px;font-size:11px;line-height:12px;color:#000;transform:scaleX(0.8536);">ImagePool_OEM</span>
<svg style="left:97.8px;top:558.8px;" width="9" height="9" viewBox="0 0 9 9"><rect x="0.5" y="0.5" width="8" height="8" rx="1" fill="#fff" stroke="#9cc8cc" stroke-width="1"/><path d="M2.5 4.5 H6.5" stroke="#101010" stroke-width="1.3"/><path d="M4.5 2.5 V6.5" stroke="#101010" stroke-width="1.3"/></svg>
<svg style="left:111.3px;top:555.4px;" width="15.2" height="15.2" viewBox="0 0 16 16"><path d="M2.7 1.5 H10.4 L13.5 4.6 V14.6 H2.7 Z" fill="#fff" stroke="#303030" stroke-width="0.9"/><path d="M10.4 1.5 V4.6 H13.5" fill="#e4e4e4" stroke="#303030" stroke-width="0.8"/><path d="M3.4 15.5 H14.4 V5.4" stroke="#505050" stroke-width="1" fill="none"/><path d="M5.2 6.5 H10.8 M5.2 9 H10.8 M5.2 11.1 H10.8 M5.2 13.1 H10.8" stroke="#3434ff" stroke-width="1.3"/><path d="M5.2 4.1 H8.6" stroke="#3434ff" stroke-width="1.3"/></svg>
<span class="t" style="left:131.95px;top:558px;font-size:11px;line-height:12px;color:#000;transform:scaleX(0.8640);">SaveRetain (PRG)</span>
<svg style="left:111.3px;top:572.9px;" width="15.2" height="15.2" viewBox="0 0 16 16"><path d="M3.5 1.5 H14.5 V14.5 H3.5 Z" fill="#fff" stroke="#404040" stroke-width="1"/><path d="M4 15.3 H15.3 V3" stroke="#707070" stroke-width="0.9" fill="none"/><path d="M5.5 5 H8.3 M9.7 5 H12.5 M5.5 7.5 H8.3 M9.7 7.5 H12.5 M5.5 10 H8.3 M9.7 10 H12.5 M5.5 12.2 H8.3 M9.7 12.2 H12.5" stroke="#909090" stroke-width="1.3"/><rect x="0.8" y="5.3" width="3" height="5.6" fill="#20a0a0" stroke="#106868" stroke-width="0.7"/></svg>
<span class="t" style="left:131.95px;top:575px;font-size:11px;line-height:12px;color:#000;transform:scaleX(0.8180);">TL_OEM</span>
<svg style="left:79.4px;top:593.7px;" width="9" height="9" viewBox="0 0 9 9"><rect x="0.5" y="0.5" width="8" height="8" rx="1" fill="#fff" stroke="#9cc8cc" stroke-width="1"/><path d="M2.5 4.5 H6.5" stroke="#101010" stroke-width="1.3"/><path d="M4.5 2.5 V6.5" stroke="#101010" stroke-width="1.3"/></svg>
<svg style="left:93.0px;top:590.4px;" width="15.2" height="15.2" viewBox="0 0 16 16"><g transform="translate(1.1,0) scale(0.95,1)"><defs><linearGradient id="fg" x1="0" y1="0" x2="0" y2="1"><stop offset="0" stop-color="#fff6b8"/><stop offset="1" stop-color="#f2c64c"/></linearGradient></defs><path d="M1 4.2 Q1 2.5 2.6 2.5 H6 L7.5 4 H13 Q14.5 4 14.5 5.5 V12 Q14.5 13.5 13 13.5 H2.5 Q1 13.5 1 12 Z" fill="#f0c040" stroke="#c08c20" stroke-width="0.9"/><path d="M1.6 6.6 Q1.6 5.6 2.8 5.6 H13.8 Q15 5.6 15 6.8 V12 Q15 13.5 13.5 13.5 H3 Q1.6 13.5 1.6 12 Z" fill="url(#fg)" stroke="#c89828" stroke-width="0.9"/></g></svg>
<span class="t" style="left:113.60px;top:593px;font-size:11px;line-height:12px;color:#000;transform:scaleX(0.8933);">Bootapplication</span>
<svg style="left:93.0px;top:607.9px;" width="15.2" height="15.2" viewBox="0 0 16 16"><path d="M1 5.4 L3.6 1.6 L5.6 2.6 L5.6 15 H1 Z" fill="#00b8c0" stroke="#000" stroke-width="0.9"/><path d="M3.6 1.6 L5 0.6 L7 1.8 L5.6 2.6" fill="#60e8f0" stroke="#000" stroke-width="0.7"/><path d="M5.6 5.6 L7.6 3.6 L9.6 5 V15 H5.6 Z" fill="#e80000" stroke="#000" stroke-width="0.9"/><path d="M9.6 4.8 L12.4 3.2 L15.2 4.4 V13.4 L12.6 15 H9.6 Z" fill="#e8e800" stroke="#000" stroke-width="0.9"/><path d="M12.6 5.6 V15 M12.6 5.6 L15.2 4.4 M9.6 4.8 L12.6 5.6" stroke="#000" stroke-width="0.7" fill="none"/><path d="M12.9 6 L14.9 5 V13.2 L12.9 14.4 Z" fill="#a0a000"/></svg>
<span class="t" style="left:113.60px;top:610px;font-size:11px;line-height:12px;color:#000;transform:scaleX(0.8889);">Library Manager</span>
<svg style="left:93.0px;top:625.3px;" width="15.2" height="15.2" viewBox="0 0 16 16"><path d="M2.7 1.5 H10.4 L13.5 4.6 V14.6 H2.7 Z" fill="#fff" stroke="#303030" stroke-width="0.9"/><path d="M10.4 1.5 V4.6 H13.5" fill="#e4e4e4" stroke="#303030" stroke-width="0.8"/><path d="M3.4 15.5 H14.4 V5.4" stroke="#505050" stroke-width="1" fill="none"/><path d="M5.2 6.5 H10.8 M5.2 9 H10.8 M5.2 11.1 H10.8 M5.2 13.1 H10.8" stroke="#3434ff" stroke-width="1.3"/><path d="M5.2 4.1 H8.6" stroke="#3434ff" stroke-width="1.3"/></svg>
<span class="t" style="left:113.60px;top:627px;font-size:11px;line-height:12px;color:#000;transform:scaleX(0.8261);">PLC_Main (PRG)</span>
<svg style="left:79.4px;top:646.1px;" width="9" height="9" viewBox="0 0 9 9"><rect x="0.5" y="0.5" width="8" height="8" rx="1" fill="#fff" stroke="#9cc8cc" stroke-width="1"/><path d="M2.5 4.5 H6.5" stroke="#101010" stroke-width="1.3"/><path d="M4.5 2.5 V6.5" stroke="#101010" stroke-width="1.3"/></svg>
<svg style="left:93.0px;top:642.8px;" width="15.2" height="15.2" viewBox="0 0 16 16"><path d="M2.7 1.5 H10.4 L13.5 4.6 V14.6 H2.7 Z" fill="#fff" stroke="#303030" stroke-width="0.9"/><path d="M10.4 1.5 V4.6 H13.5" fill="#e4e4e4" stroke="#303030" stroke-width="0.8"/><path d="M3.4 15.5 H14.4 V5.4" stroke="#505050" stroke-width="1" fill="none"/><path d="M5.2 6.5 H10.8 M5.2 9 H10.8 M5.2 11.1 H10.8 M5.2 13.1 H10.8" stroke="#3434ff" stroke-width="1.3"/><path d="M5.2 4.1 H8.6" stroke="#3434ff" stroke-width="1.3"/></svg>
<span class="t" style="left:113.60px;top:645px;font-size:11px;line-height:12px;color:#000;transform:scaleX(0.8040);">PLC_PRG (PRG)</span>
<svg style="left:93.0px;top:660.3px;" width="15.2" height="15.2" viewBox="0 0 16 16"><path d="M2.7 1.5 H10.4 L13.5 4.6 V14.6 H2.7 Z" fill="#fff" stroke="#303030" stroke-width="0.9"/><path d="M10.4 1.5 V4.6 H13.5" fill="#e4e4e4" stroke="#303030" stroke-width="0.8"/><path d="M3.4 15.5 H14.4 V5.4" stroke="#505050" stroke-width="1" fill="none"/><path d="M5.2 6.5 H10.8 M5.2 9 H10.8 M5.2 11.1 H10.8 M5.2 13.1 H10.8" stroke="#3434ff" stroke-width="1.3"/><path d="M5.2 4.1 H8.6" stroke="#3434ff" stroke-width="1.3"/></svg>
<span class="t" style="left:113.60px;top:662px;font-size:11px;line-height:12px;color:#000;transform:scaleX(0.8259);">PLC_PRG_Alarms (PRG)</span>
<svg style="left:93.0px;top:677.7px;" width="15.2" height="15.2" viewBox="0 0 16 16"><path d="M2.7 1.5 H10.4 L13.5 4.6 V14.6 H2.7 Z" fill="#fff" stroke="#303030" stroke-width="0.9"/><path d="M10.4 1.5 V4.6 H13.5" fill="#e4e4e4" stroke="#303030" stroke-width="0.8"/><path d="M3.4 15.5 H14.4 V5.4" stroke="#505050" stroke-width="1" fill="none"/><path d="M5.2 6.5 H10.8 M5.2 9 H10.8 M5.2 11.1 H10.8 M5.2 13.1 H10.8" stroke="#3434ff" stroke-width="1.3"/><path d="M5.2 4.1 H8.6" stroke="#3434ff" stroke-width="1.3"/></svg>
<span class="t" style="left:113.60px;top:680px;font-size:11px;line-height:12px;color:#000;transform:scaleX(0.8152);">PRG_Visu (PRG)</span>
<svg style="left:79.4px;top:698.5px;" width="9" height="9" viewBox="0 0 9 9"><rect x="0.5" y="0.5" width="8" height="8" rx="1" fill="#fff" stroke="#9cc8cc" stroke-width="1"/><path d="M2.5 4.5 H6.5" stroke="#101010" stroke-width="1.3"/></svg>
<svg style="left:93.0px;top:695.2px;" width="15.2" height="15.2" viewBox="0 0 16 16"><path d="M1.5 1.5 H14.5 V14.5 H1.5 Z" fill="#f4f4f4" stroke="#404040" stroke-width="1"/><path d="M2 15.3 H15.3 V2.6" stroke="#707070" stroke-width="0.9" fill="none"/><path d="M9.2 2.6 V7 M11.2 2.6 V9 M13.2 2.6 V6" stroke="#404040" stroke-width="1.1"/><circle cx="3.6" cy="4" r="1.2" fill="#30c030"/><g transform="translate(7,10)"><g fill="#f0d000" stroke="#504000" stroke-width="0.5"><rect x="-1.2" y="-5" width="2.4" height="3" transform="rotate(0)"/><rect x="-1.2" y="-5" width="2.4" height="3" transform="rotate(60)"/><rect x="-1.2" y="-5" width="2.4" height="3" transform="rotate(120)"/><rect x="-1.2" y="-5" width="2.4" height="3" transform="rotate(180)"/><rect x="-1.2" y="-5" width="2.4" height="3" transform="rotate(240)"/><rect x="-1.2" y="-5" width="2.4" height="3" transform="rotate(300)"/></g><circle r="3.3" fill="#f0d000" stroke="#504000" stroke-width="0.6"/><circle r="1.3" fill="#c02020"/></g><path d="M10.4 9 L13.8 13.8 M13.8 9 L10.4 13.8" stroke="#b02020" stroke-width="1.2"/></svg>
<span class="t" style="left:113.60px;top:697px;font-size:11px;line-height:12px;color:#000;transform:scaleX(0.9011);">Task Configuration</span>
<svg style="left:97.8px;top:716.0px;" width="9" height="9" viewBox="0 0 9 9"><rect x="0.5" y="0.5" width="8" height="8" rx="1" fill="#fff" stroke="#9cc8cc" stroke-width="1"/><path d="M2.5 4.5 H6.5" stroke="#101010" stroke-width="1.3"/></svg>
<svg style="left:111.3px;top:712.7px;" width="15.2" height="15.2" viewBox="0 0 16 16"><g transform="translate(1.2,0)"><path d="M1 11.4 L6 8.8 L15 11 L10 13.8 Z" fill="#fff" stroke="#303030" stroke-width="0.9"/><path d="M1 9.2 L6 6.6 L15 8.8 L10 11.6 Z" fill="#fff" stroke="#303030" stroke-width="0.9"/><path d="M1 7 L6 4.4 L15 6.6 L10 9.4 Z" fill="#fff" stroke="#303030" stroke-width="0.9"/><path d="M1 11.4 V12.6 L10 15 L15 12.2 V11" fill="none" stroke="#303030" stroke-width="0.9"/><path d="M8.6 0.6 V4.6 M6.6 3.2 L8.6 5.8 L10.6 3.2 Z" stroke="#1030c0" stroke-width="1.5" fill="#1030c0" stroke-linejoin="round"/></g></svg>
<span class="t" style="left:131.95px;top:715px;font-size:11px;line-height:12px;color:#000;transform:scaleX(0.8609);">MainTask</span>
<svg style="left:129.7px;top:730.1px;" width="15.2" height="15.2" viewBox="0 0 16 16"><path d="M2.7 1.5 H10.4 L13.5 4.6 V14.6 H2.7 Z" fill="#fff" stroke="#303030" stroke-width="0.9"/><path d="M10.4 1.5 V4.6 H13.5" fill="#e4e4e4" stroke="#303030" stroke-width="0.8"/><path d="M3.4 15.5 H14.4 V5.4" stroke="#505050" stroke-width="1" fill="none"/><g transform="translate(-0.8,0)"><rect x="5.2" y="3.2" width="4.2" height="4.2" fill="#fff" stroke="#c02020" stroke-width="1.2"/><rect x="5.2" y="8" width="4.2" height="4.2" fill="#fff" stroke="#2828c8" stroke-width="1.1"/><rect x="1.2" y="7" width="4" height="4" fill="#fff" stroke="#209020" stroke-width="1.2"/></g></svg>
<span class="t" style="left:150.30px;top:732px;font-size:11px;line-height:12px;color:#000;transform:scaleX(0.7789);">PLC_PRG</span>
<svg style="left:129.7px;top:747.6px;" width="15.2" height="15.2" viewBox="0 0 16 16"><path d="M2.7 1.5 H10.4 L13.5 4.6 V14.6 H2.7 Z" fill="#fff" stroke="#303030" stroke-width="0.9"/><path d="M10.4 1.5 V4.6 H13.5" fill="#e4e4e4" stroke="#303030" stroke-width="0.8"/><path d="M3.4 15.5 H14.4 V5.4" stroke="#505050" stroke-width="1" fill="none"/><g transform="translate(-0.8,0)"><rect x="5.2" y="3.2" width="4.2" height="4.2" fill="#fff" stroke="#c02020" stroke-width="1.2"/><rect x="5.2" y="8" width="4.2" height="4.2" fill="#fff" stroke="#2828c8" stroke-width="1.1"/><rect x="1.2" y="7" width="4" height="4" fill="#fff" stroke="#209020" stroke-width="1.2"/></g></svg>
<span class="t" style="left:150.30px;top:750px;font-size:11px;line-height:12px;color:#000;transform:scaleX(0.7976);">PRG_Visu</span>
<svg style="left:129.7px;top:765.1px;" width="15.2" height="15.2" viewBox="0 0 16 16"><path d="M2.7 1.5 H10.4 L13.5 4.6 V14.6 H2.7 Z" fill="#fff" stroke="#303030" stroke-width="0.9"/><path d="M10.4 1.5 V4.6 H13.5" fill="#e4e4e4" stroke="#303030" stroke-width="0.8"/><path d="M3.4 15.5 H14.4 V5.4" stroke="#505050" stroke-width="1" fill="none"/><g transform="translate(-0.8,0)"><rect x="5.2" y="3.2" width="4.2" height="4.2" fill="#fff" stroke="#c02020" stroke-width="1.2"/><rect x="5.2" y="8" width="4.2" height="4.2" fill="#fff" stroke="#2828c8" stroke-width="1.1"/><rect x="1.2" y="7" width="4" height="4" fill="#fff" stroke="#209020" stroke-width="1.2"/></g></svg>
<span class="t" style="left:150.30px;top:767px;font-size:11px;line-height:12px;color:#000;transform:scaleX(0.8139);">PLC_Main</span>
<svg style="left:97.8px;top:785.9px;" width="9" height="9" viewBox="0 0 9 9"><rect x="0.5" y="0.5" width="8" height="8" rx="1" fill="#fff" stroke="#9cc8cc" stroke-width="1"/><path d="M2.5 4.5 H6.5" stroke="#101010" stroke-width="1.3"/></svg>
<svg style="left:111.3px;top:782.6px;" width="15.2" height="15.2" viewBox="0 0 16 16"><g transform="translate(1.2,0)"><path d="M1 11.4 L6 8.8 L15 11 L10 13.8 Z" fill="#fff" stroke="#303030" stroke-width="0.9"/><path d="M1 9.2 L6 6.6 L15 8.8 L10 11.6 Z" fill="#fff" stroke="#303030" stroke-width="0.9"/><path d="M1 7 L6 4.4 L15 6.6 L10 9.4 Z" fill="#fff" stroke="#303030" stroke-width="0.9"/><path d="M1 11.4 V12.6 L10 15 L15 12.2 V11" fill="none" stroke="#303030" stroke-width="0.9"/><path d="M8.6 0.6 V4.6 M6.6 3.2 L8.6 5.8 L10.6 3.2 Z" stroke="#1030c0" stroke-width="1.5" fill="#1030c0" stroke-linejoin="round"/></g></svg>
<span class="t" style="left:131.95px;top:785px;font-size:11px;line-height:12px;color:#000;transform:scaleX(0.8894);">SaveRetainTask</span>
<svg style="left:129.7px;top:800.0px;" width="15.2" height="15.2" viewBox="0 0 16 16"><path d="M2.7 1.5 H10.4 L13.5 4.6 V14.6 H2.7 Z" fill="#fff" stroke="#303030" stroke-width="0.9"/><path d="M10.4 1.5 V4.6 H13.5" fill="#e4e4e4" stroke="#303030" stroke-width="0.8"/><path d="M3.4 15.5 H14.4 V5.4" stroke="#505050" stroke-width="1" fill="none"/><g transform="translate(-0.8,0)"><rect x="5.2" y="3.2" width="4.2" height="4.2" fill="#fff" stroke="#c02020" stroke-width="1.2"/><rect x="5.2" y="8" width="4.2" height="4.2" fill="#fff" stroke="#2828c8" stroke-width="1.1"/><rect x="1.2" y="7" width="4" height="4" fill="#fff" stroke="#209020" stroke-width="1.2"/></g></svg>
<span class="t" style="left:150.30px;top:802px;font-size:11px;line-height:12px;color:#000;transform:scaleX(0.8757);">SaveRetain</span>
<svg style="left:97.8px;top:820.8px;" width="9" height="9" viewBox="0 0 9 9"><rect x="0.5" y="0.5" width="8" height="8" rx="1" fill="#fff" stroke="#9cc8cc" stroke-width="1"/><path d="M2.5 4.5 H6.5" stroke="#101010" stroke-width="1.3"/></svg>
<svg style="left:111.3px;top:817.5px;" width="15.2" height="15.2" viewBox="0 0 16 16"><g transform="translate(1.2,0)"><path d="M1 11.4 L6 8.8 L15 11 L10 13.8 Z" fill="#fff" stroke="#303030" stroke-width="0.9"/><path d="M1 9.2 L6 6.6 L15 8.8 L10 11.6 Z" fill="#fff" stroke="#303030" stroke-width="0.9"/><path d="M1 7 L6 4.4 L15 6.6 L10 9.4 Z" fill="#fff" stroke="#303030" stroke-width="0.9"/><path d="M1 11.4 V12.6 L10 15 L15 12.2 V11" fill="none" stroke="#303030" stroke-width="0.9"/><path d="M8.6 0.6 V4.6 M6.6 3.2 L8.6 5.8 L10.6 3.2 Z" stroke="#1030c0" stroke-width="1.5" fill="#1030c0" stroke-linejoin="round"/></g></svg>
<span class="t" style="left:131.95px;top:820px;font-size:11px;line-height:12px;color:#000;transform:scaleX(0.8257);">VISU_TASK</span>
<svg style="left:129.7px;top:835.0px;" width="15.2" height="15.2" viewBox="0 0 16 16"><path d="M2.7 1.5 H10.4 L13.5 4.6 V14.6 H2.7 Z" fill="#fff" stroke="#303030" stroke-width="0.9"/><path d="M10.4 1.5 V4.6 H13.5" fill="#e4e4e4" stroke="#303030" stroke-width="0.8"/><path d="M3.4 15.5 H14.4 V5.4" stroke="#505050" stroke-width="1" fill="none"/><g transform="translate(-0.8,0)"><rect x="5.2" y="3.2" width="4.2" height="4.2" fill="#fff" stroke="#c02020" stroke-width="1.2"/><rect x="5.2" y="8" width="4.2" height="4.2" fill="#fff" stroke="#2828c8" stroke-width="1.1"/><rect x="1.2" y="7" width="4" height="4" fill="#fff" stroke="#209020" stroke-width="1.2"/></g></svg>
<span class="t" style="left:150.30px;top:837px;font-size:11px;line-height:12px;color:#000;transform:scaleX(0.8382);">VisuElems.Visu_Prg</span>
<svg style="left:129.7px;top:852.4px;" width="15.2" height="15.2" viewBox="0 0 16 16"><path d="M2.7 1.5 H10.4 L13.5 4.6 V14.6 H2.7 Z" fill="#fff" stroke="#303030" stroke-width="0.9"/><path d="M10.4 1.5 V4.6 H13.5" fill="#e4e4e4" stroke="#303030" stroke-width="0.8"/><path d="M3.4 15.5 H14.4 V5.4" stroke="#505050" stroke-width="1" fill="none"/><g transform="translate(-0.8,0)"><rect x="5.2" y="3.2" width="4.2" height="4.2" fill="#fff" stroke="#c02020" stroke-width="1.2"/><rect x="5.2" y="8" width="4.2" height="4.2" fill="#fff" stroke="#2828c8" stroke-width="1.1"/><rect x="1.2" y="7" width="4" height="4" fill="#fff" stroke="#209020" stroke-width="1.2"/></g></svg>
<span class="t" style="left:150.30px;top:855px;font-size:11px;line-height:12px;color:#000;transform:scaleX(0.8359);">PRG_Visualization</span>
<svg style="left:129.7px;top:869.9px;" width="15.2" height="15.2" viewBox="0 0 16 16"><path d="M2.7 1.5 H10.4 L13.5 4.6 V14.6 H2.7 Z" fill="#fff" stroke="#303030" stroke-width="0.9"/><path d="M10.4 1.5 V4.6 H13.5" fill="#e4e4e4" stroke="#303030" stroke-width="0.8"/><path d="M3.4 15.5 H14.4 V5.4" stroke="#505050" stroke-width="1" fill="none"/><g transform="translate(-0.8,0)"><rect x="5.2" y="3.2" width="4.2" height="4.2" fill="#fff" stroke="#c02020" stroke-width="1.2"/><rect x="5.2" y="8" width="4.2" height="4.2" fill="#fff" stroke="#2828c8" stroke-width="1.1"/><rect x="1.2" y="7" width="4" height="4" fill="#fff" stroke="#209020" stroke-width="1.2"/></g></svg>
<span class="t" style="left:150.30px;top:872px;font-size:11px;line-height:12px;color:#000;transform:scaleX(0.8626);">VisuClientManager</span>
<svg style="left:79.4px;top:890.7px;" width="9" height="9" viewBox="0 0 9 9"><rect x="0.5" y="0.5" width="8" height="8" rx="1" fill="#fff" stroke="#9cc8cc" stroke-width="1"/><path d="M2.5 4.5 H6.5" stroke="#101010" stroke-width="1.3"/><path d="M4.5 2.5 V6.5" stroke="#101010" stroke-width="1.3"/></svg>
<svg style="left:93.0px;top:887.4px;" width="15.2" height="15.2" viewBox="0 0 16 16"><path d="M2.7 1.5 H10.4 L13.5 4.6 V14.6 H2.7 Z" fill="#fff" stroke="#303030" stroke-width="0.9"/><path d="M10.4 1.5 V4.6 H13.5" fill="#e4e4e4" stroke="#303030" stroke-width="0.8"/><path d="M3.4 15.5 H14.4 V5.4" stroke="#505050" stroke-width="1" fill="none"/><g transform="translate(-0.8,0)"><rect x="4.6" y="3" width="6" height="4.6" fill="#e82020" stroke="#600000" stroke-width="0.7"/><path d="M3 14 V9.4 Q3 7.8 5 7.8 H10 Q12 7.8 12 9.4 V14 Z" fill="#c81818" stroke="#500000" stroke-width="0.7"/><rect x="5.6" y="9.6" width="3.8" height="3.4" fill="#fff"/><rect x="6.4" y="4" width="2.2" height="2.2" fill="#ffd0d0"/></g></svg>
<span class="t" style="left:113.60px;top:890px;font-size:11px;line-height:12px;color:#000;transform:scaleX(0.8664);">Visualization Manager</span>
<svg style="left:56.3px;top:904.8px;" width="15.2" height="15.2" viewBox="0 0 16 16"><rect x="0" y="0.5" width="16" height="15" rx="1.5" fill="#1c48b0"/><text x="8" y="7.6" font-size="7.5" font-weight="700" fill="#fff" text-anchor="middle" font-family="Liberation Sans" textLength="14" lengthAdjust="spacingAndGlyphs">PLC</text><rect x="2" y="9.6" width="12" height="4.2" fill="#a8c4f0"/><path d="M5 9.6 V13.8 M8 9.6 V13.8 M11 9.6 V13.8" stroke="#1c48b0" stroke-width="0.8"/></svg>
<span class="t" style="left:76.90px;top:907px;font-size:11px;line-height:12px;color:#000;transform:scaleX(0.8878);">PLC_Manager (70.0000)</span>
<svg style="left:56.3px;top:922.3px;" width="15.2" height="15.2" viewBox="0 0 16 16"><rect x="0" y="0.5" width="16" height="15" rx="3.5" fill="#00188c"/><path d="M1.6 9.4 Q8 1.6 14.4 9.4 Q8 13.6 1.6 9.4 Z" fill="#fff"/><circle cx="8.6" cy="8.8" r="2.9" fill="#00188c"/><circle cx="7.4" cy="7.6" r="1" fill="#fff"/></svg>
<span class="t" style="left:76.90px;top:924px;font-size:11px;line-height:12px;color:#000;transform:scaleX(0.9185);">Observer (705003)</span>
<svg style="left:42.7px;top:943.1px;" width="9" height="9" viewBox="0 0 9 9"><rect x="0.5" y="0.5" width="8" height="8" rx="1" fill="#fff" stroke="#9cc8cc" stroke-width="1"/><path d="M2.5 4.5 H6.5" stroke="#101010" stroke-width="1.3"/><path d="M4.5 2.5 V6.5" stroke="#101010" stroke-width="1.3"/></svg>
<svg style="left:56.3px;top:939.8px;" width="15.2" height="15.2" viewBox="0 0 16 16"><rect x="0" y="0.5" width="16" height="15" rx="3.5" fill="#00188c"/><path d="M2.4 3.4 H13.6 V10 H2.4 Z" fill="#fff"/><path d="M6.2 3.4 V10 M9.8 3.4 V10" stroke="#00188c" stroke-width="1.6"/><path d="M1.8 12.4 H14.2" stroke="#fff" stroke-width="1.6"/></svg>
<span class="t" style="left:76.90px;top:942px;font-size:11px;line-height:12px;color:#000;transform:scaleX(0.8965);">Systembus (705000)</span>
<div style="left:277px;top:119px;width:16px;height:15px;background:#e1e1e1;border:1px solid #adadad;box-sizing:border-box;"></div>
<svg style="left:281px;top:124px;" width="8" height="5" viewBox="0 0 8 5"><path d="M0 0 H8 L4 4.5 Z" fill="#000"/></svg>
<svg style="left:241.2px;top:106.4px;" width="8" height="5" viewBox="0 0 8 5"><path d="M0 0 H7.4 L3.7 4 Z" fill="#000"/></svg>
<svg style="left:260px;top:103.8px;" width="7.2" height="8.4" viewBox="0 0 7.2 8.4"><path d="M1.6 0.6 H5.6 M2.2 0.6 V4.6 M5 0.6 V4.6 M0.6 5 H6.6 M3.6 5 V8" stroke="#000" stroke-width="1.1" fill="none"/><path d="M4 0.6 H5 V4.6 H4Z" fill="#000"/></svg>
<svg style="left:278.6px;top:104px;" width="8" height="7.2" viewBox="0 0 8 7.2"><path d="M0.8 0.6 L7.2 6.6 M7.2 0.6 L0.8 6.6" stroke="#000" stroke-width="1.9"/></svg>
<div style="left:1px;top:1045px;width:292px;height:16px;background:#f0f0f0;"></div>
<div style="left:17px;top:1046px;width:260px;height:14px;background:#cdcdcd;"></div>
<svg style="left:5px;top:1048px;" width="8" height="10" viewBox="0 0 8 10"><path d="M6 1 L2 5 L6 9" stroke="#404040" stroke-width="1.6" fill="none"/></svg>
<svg style="left:280px;top:1048px;" width="8" height="10" viewBox="0 0 8 10"><path d="M2 1 L6 5 L2 9" stroke="#404040" stroke-width="1.6" fill="none"/></svg>
<svg style="left:3.0px;top:53.5px;" width="16" height="16" viewBox="0 0 16 16"><path d="M3.5 3.5 H10 L13.5 7 V15 H3.5 Z" fill="#fff" stroke="#505050"/><path d="M10 3.5 V7 H13.5" fill="#ddd" stroke="#505050" stroke-width=".8"/><path d="M5.5 7.5 H11.5 M5.5 9.5 H11.5 M5.5 11.5 H11.5 M5.5 13.2 H11.5" stroke="#b0b0b0" stroke-width=".8"/><path d="M3 0 V5.6 M0.2 2.8 H5.8 M1 0.8 L5 4.8 M5 0.8 L1 4.8" stroke="#e4d400" stroke-width="1"/></svg>
<svg style="left:24.5px;top:53.5px;" width="16" height="16" viewBox="0 0 16 16"><path d="M1 4.5 H5.5 L7 6 H12 V13.5 H1 Z" fill="#b4b43c" stroke="#5c5c14" stroke-width=".9"/><path d="M3.4 8.2 H15 L12 13.5 H1 Z" fill="#d2d25a" stroke="#5c5c14" stroke-width=".9"/><path d="M9.5 3.5 Q12 1 14 3 M14 3 L12.2 3 M14 3 V1.2" stroke="#303030" stroke-width=".9" fill="none"/></svg>
<svg style="left:45.5px;top:53.5px;" width="16" height="16" viewBox="0 0 16 16"><path d="M1.5 1.5 H14.5 V14.5 H3 L1.5 13 Z" fill="#6e6e2c" stroke="#3a3a10" stroke-width=".9"/><rect x="4" y="1.8" width="8" height="5.6" fill="#dcdcdc"/><rect x="4.5" y="9.6" width="7" height="4.9" fill="#3c3c3c"/><rect x="9.2" y="10.4" width="1.6" height="3.2" fill="#d8d8d8"/></svg>
<div style="left:67px;top:53.5px;width:1px;height:16px;background:#b4b4b4;"></div>
<svg style="left:72.0px;top:53.5px;" width="16" height="16" viewBox="0 0 16 16"><path d="M4 6 L5.5 1.5 H11.5 L12 6" fill="#fff" stroke="#404040" stroke-width=".9"/><path d="M1 6.5 Q1 5.5 2 5.5 H14 Q15 5.5 15 6.5 V11.5 H1 Z" fill="#d8d8d8" stroke="#303030" stroke-width=".9"/><path d="M3 11.5 H13 V14.5 H3 Z" fill="#f8f8f8" stroke="#303030" stroke-width=".9"/><path d="M2.5 9 H13.5" stroke="#606060" stroke-width="1"/><rect x="11.5" y="7" width="1.6" height="1" fill="#40c040"/></svg>
<div style="left:94px;top:53.5px;width:1px;height:16px;background:#b4b4b4;"></div>
<svg style="left:99.0px;top:53.5px;" width="16" height="16" viewBox="0 0 16 16"><path d="M1 1 H7 L9 3 V9.5 H1 Z" fill="#60a0e8" stroke="#1040a0" stroke-width=".9"/><path d="M2.5 3.5 H6.5 M2.5 5.5 H7.5 M2.5 7.5 H7.5" stroke="#fff" stroke-width=".8"/><path d="M5.5 7 H9.5 L10.5 8.5 H15 V14.5 H5.5 Z" fill="#f0c848" stroke="#806010" stroke-width=".9"/><path d="M9 2.5 H14 V7" fill="none" stroke="#1040a0" stroke-width="1"/></svg>
<div style="left:121px;top:53.5px;width:1px;height:16px;background:#b4b4b4;"></div>
<svg style="left:125.0px;top:53.5px;" width="16" height="16" viewBox="0 0 16 16"><path d="M3 9.5 Q8 3 13 7.5 Q14.5 10 12 12.5" fill="none" stroke="#9a9a9a" stroke-width="1.4"/><path d="M2.2 5.5 V10.3 H7" fill="none" stroke="#9a9a9a" stroke-width="1.4"/></svg>
<svg style="left:146.5px;top:53.5px;" width="16" height="16" viewBox="0 0 16 16"><path d="M13 9.5 Q8 3 3 7.5 Q1.5 10 4 12.5" fill="none" stroke="#9a9a9a" stroke-width="1.4"/><path d="M13.8 5.5 V10.3 H9" fill="none" stroke="#9a9a9a" stroke-width="1.4"/></svg>
<svg style="left:167.0px;top:53.5px;" width="16" height="16" viewBox="0 0 16 16"><path d="M5.5 1 L9.5 10 M10.5 1 L6.5 10" stroke="#9a9a9a" stroke-width="1.2" fill="none"/><ellipse cx="5.4" cy="12.4" rx="1.8" ry="2.3" fill="none" stroke="#9a9a9a" stroke-width="1.2"/><ellipse cx="10.6" cy="12.4" rx="1.8" ry="2.3" fill="none" stroke="#9a9a9a" stroke-width="1.2"/></svg>
<svg style="left:188.0px;top:53.5px;" width="16" height="16" viewBox="0 0 16 16"><path d="M1.5 1.5 H6.5 L9 4 V10.5 H1.5 Z" fill="#e4e4e4" stroke="#9a9a9a"/><path d="M6.5 5.5 H11.5 L14 8 V14.5 H6.5 Z" fill="#dcdcdc" stroke="#9a9a9a"/><path d="M8 9 H12.5 M8 11 H12.5 M8 13 H12.5" stroke="#9a9a9a" stroke-width=".8"/></svg>
<svg style="left:209.5px;top:53.5px;" width="16" height="16" viewBox="0 0 16 16"><path d="M1.5 3 H12 V14 H1.5 Z" fill="#c8c8c8" stroke="#9a9a9a"/><rect x="4.5" y="1.2" width="4.5" height="3" fill="#b0b0b0" stroke="#9a9a9a" stroke-width=".8"/><path d="M7 6.5 H12 L14.5 9 V15 H7 Z" fill="#ececec" stroke="#9a9a9a"/><path d="M8.5 10 H13 M8.5 12 H13" stroke="#9a9a9a" stroke-width=".8"/></svg>
<svg style="left:230.5px;top:53.5px;" width="16" height="16" viewBox="0 0 16 16"><path d="M2.5 2.5 L13.5 13.5 M13.5 2.5 L2.5 13.5" stroke="#9a9a9a" stroke-width="1.5"/></svg>
<div style="left:252px;top:53.5px;width:1px;height:16px;background:#b4b4b4;"></div>
<svg style="left:257.0px;top:53.5px;" width="16" height="16" viewBox="0 0 16 16"><path d="M3.2 3 Q3.2 1.6 4.6 1.6 Q6 1.6 6 3 L6.8 9 H9.2 L10 3 Q10 1.6 11.4 1.6 Q12.8 1.6 12.8 3 L14.8 10.5 Q15.2 14 12.6 14 Q10 14 9.6 11.4 H6.4 Q6 14 3.4 14 Q0.8 14 1.2 10.5 Z" fill="#181818"/><path d="M6.6 4.5 H9.4 V8 H6.6 Z" fill="#181818"/><ellipse cx="3.8" cy="11.6" rx="1.5" ry="1.3" fill="#d8d8d8"/><ellipse cx="12.2" cy="11.6" rx="1.5" ry="1.3" fill="#d8d8d8"/></svg>
<svg style="left:279.0px;top:53.5px;" width="16" height="16" viewBox="0 0 16 16"><text x="1" y="6.5" font-size="7.5" font-family="Liberation Sans" font-weight="400" fill="#303030">A</text><text x="10" y="15.5" font-size="7" font-family="Liberation Sans" font-weight="400" fill="#505050">B</text><path d="M7.5 2.5 Q12.5 2 12.5 7.5 M12.5 7.5 L10.8 5.8 M12.5 7.5 L14.2 5.8" stroke="#404040" stroke-width=".9" fill="none" stroke-dasharray="1.6 1"/><path d="M3.5 8.5 Q3 13 8 13 M8 13 L6.3 11.5 M8 13 L6.3 14.5" stroke="#404040" stroke-width=".9" fill="none" stroke-dasharray="1.6 1"/></svg>
<svg style="left:299.5px;top:53.5px;" width="16" height="16" viewBox="0 0 16 16"><path d="M3.2 3 Q3.2 1.6 4.6 1.6 Q6 1.6 6 3 L6.8 9 H9.2 L10 3 Q10 1.6 11.4 1.6 Q12.8 1.6 12.8 3 L14.8 10.5 Q15.2 14 12.6 14 Q10 14 9.6 11.4 H6.4 Q6 14 3.4 14 Q0.8 14 1.2 10.5 Z" fill="#181818"/><path d="M6.6 4.5 H9.4 V8 H6.6 Z" fill="#181818"/><ellipse cx="3.8" cy="11.6" rx="1.5" ry="1.3" fill="#d8d8d8"/><ellipse cx="12.2" cy="11.6" rx="1.5" ry="1.3" fill="#d8d8d8"/><path d="M6.5 9 H10 L11 10.2 H15.5 V15.5 H6.5 Z" fill="#f0c040" stroke="#806010" stroke-width=".8"/></svg>
<svg style="left:320.5px;top:53.5px;" width="16" height="16" viewBox="0 0 16 16"><text x="1" y="6.5" font-size="7.5" font-family="Liberation Sans" font-weight="400" fill="#303030">A</text><path d="M7.5 2.5 Q12.5 2 12.5 6.5 M12.5 2.5 L14.5 1" stroke="#404040" stroke-width=".9" fill="none" stroke-dasharray="1.6 1"/><path d="M3.5 8 Q3 11 5.5 11.5" stroke="#404040" stroke-width=".9" fill="none" stroke-dasharray="1.6 1"/><path d="M6.5 9 H10 L11 10.2 H15.5 V15.5 H6.5 Z" fill="#f0c040" stroke="#806010" stroke-width=".8"/></svg>
<div style="left:342px;top:53.5px;width:1px;height:16px;background:#b4b4b4;"></div>
<svg style="left:347.5px;top:53.5px;" width="16" height="16" viewBox="0 0 16 16"><path d="M4.5 2 H11.5 V14 L8 11 L4.5 14 Z" fill="#9a9a9a"/></svg>
<svg style="left:368.0px;top:53.5px;" width="16" height="16" viewBox="0 0 16 16"><path d="M7 4 H13 V14.5 L10 12 L7 14.5 Z" fill="#9a9a9a"/><path d="M1.5 5 L5.5 1.5 V3.6 H9 V6.4 H5.5 V8.5 Z" fill="#9a9a9a"/></svg>
<svg style="left:389.5px;top:53.5px;" width="16" height="16" viewBox="0 0 16 16"><path d="M7 4 H13 V14.5 L10 12 L7 14.5 Z" fill="#9a9a9a"/><path d="M9 5 L5 1.5 V3.6 H1.5 V6.4 H5 V8.5 Z" fill="#9a9a9a"/></svg>
<svg style="left:411.0px;top:53.5px;" width="16" height="16" viewBox="0 0 16 16"><path d="M7 4 H13 V14.5 L10 12 L7 14.5 Z" fill="#9a9a9a"/><path d="M1.5 1.5 L8 8 M8 1.5 L1.5 8" stroke="#9a9a9a" stroke-width="1.4"/></svg>
<div style="left:432px;top:53.5px;width:1px;height:16px;background:#b4b4b4;"></div>
<svg style="left:437.5px;top:53.5px;" width="16" height="16" viewBox="0 0 16 16"><path d="M1.5 2.5 H10.5 V5 H14.5 V14 H4.5 V11 H1.5 Z" fill="#f0f0f0" stroke="#303030" stroke-width="1"/><rect x="6" y="7" width="7" height="5.4" fill="#5888d0" stroke="#203870" stroke-width=".7"/><path d="M3 4.5 H9 M3 6.5 H5" stroke="#606060" stroke-width=".9"/></svg>
<div style="left:460px;top:53.5px;width:1px;height:16px;background:#b4b4b4;"></div>
<svg style="left:464.0px;top:53.5px;" width="16" height="16" viewBox="0 0 16 16"><path d="M3 5 H14 V14 H3 Z" fill="#dadada" stroke="#9a9a9a"/><path d="M5 8 H12 M5 10.5 H12 M7 6 V13 M10 6 V13" stroke="#9a9a9a" stroke-width=".7"/><path d="M3 0.5 V5.5 M0.5 3 H5.5 M1.2 1.2 L4.8 4.8 M4.8 1.2 L1.2 4.8" stroke="#b8b8b8" stroke-width=".9"/></svg>
<svg style="left:481px;top:60px;" width="6" height="4" viewBox="0 0 6 4"><path d="M0 0 H5.5 L2.75 3 Z" fill="#9a9a9a"/></svg>
<svg style="left:491.0px;top:53.5px;" width="16" height="16" viewBox="0 0 16 16"><path d="M2.5 4.5 H9.5 V14.5 H2.5 Z" fill="#fff" stroke="#404040" stroke-width="1"/><path d="M7 2 Q11 0.5 13 3.5 M13 3.5 L10.6 3.4 M13 3.5 L13.2 1.2" stroke="#303030" stroke-width="1" fill="none"/><path d="M9.5 6 L11.5 6 V14.5 H9.5" fill="#e8e8e8" stroke="#404040" stroke-width=".8"/></svg>
<div style="left:513px;top:53.5px;width:1px;height:16px;background:#b4b4b4;"></div>
<svg style="left:517.5px;top:53.5px;" width="16" height="16" viewBox="0 0 16 16"><rect x="1.5" y="5.5" width="13" height="9" fill="#e8e8e8" stroke="#303030" stroke-width="1"/><path d="M3 8 H13 M3 10 H13 M3 12 H13 M5 7 V14 M8 7 V14 M11 7 V14" stroke="#606060" stroke-width=".6"/><path d="M3 1 V4 M1.8 2.8 L3 4.5 L4.2 2.8 M6.5 1 V4 M5.3 2.8 L6.5 4.5 L7.7 2.8 M10 1 V4 M8.8 2.8 L10 4.5 L11.2 2.8 M13.5 1 V4 M12.3 2.8 L13.5 4.5 L14.7 2.8" stroke="#2040d0" stroke-width="1" fill="none"/></svg>
<div style="left:540px;top:53.5px;width:1px;height:16px;background:#b4b4b4;"></div>
<div style="left:543px;top:51px;width:163px;height:21px;background:#ffffff;"></div>
<span class="t" style="left:547.50px;top:56px;font-size:12.5px;line-height:14px;color:#000;transform:scaleX(0.8672);">Application [CPU: PLC Logic]</span>
<svg style="left:697px;top:59px;" width="8" height="5" viewBox="0 0 8 5"><path d="M0 0 H7 L3.5 4 Z" fill="#000"/></svg>
<svg style="left:710.0px;top:53.5px;" width="16" height="16" viewBox="0 0 16 16"><g transform="translate(6.5,7)"><g fill="#8088c8"><rect x="-1.3" y="-6.199999999999999" width="2.6" height="3" transform="rotate(0)"/><rect x="-1.3" y="-6.199999999999999" width="2.6" height="3" transform="rotate(45)"/><rect x="-1.3" y="-6.199999999999999" width="2.6" height="3" transform="rotate(90)"/><rect x="-1.3" y="-6.199999999999999" width="2.6" height="3" transform="rotate(135)"/><rect x="-1.3" y="-6.199999999999999" width="2.6" height="3" transform="rotate(180)"/><rect x="-1.3" y="-6.199999999999999" width="2.6" height="3" transform="rotate(225)"/><rect x="-1.3" y="-6.199999999999999" width="2.6" height="3" transform="rotate(270)"/><rect x="-1.3" y="-6.199999999999999" width="2.6" height="3" transform="rotate(315)"/></g><circle r="4.6" fill="#8088c8"/><circle r="2.1" fill="#f4f4f4"/></g><circle cx="12.2" cy="3.8" r="2.8" fill="#20c030" stroke="#0a7010" stroke-width=".6"/><path d="M9 10 L14 12.5 L11.6 13 L13 15.5 L12 16 L10.6 13.6 L9 15 Z" fill="#202020"/></svg>
<svg style="left:732.0px;top:53.5px;" width="16" height="16" viewBox="0 0 16 16"><g transform="translate(6.5,7.5)"><g fill="#a8a8a8"><rect x="-1.3" y="-6.199999999999999" width="2.6" height="3" transform="rotate(0)"/><rect x="-1.3" y="-6.199999999999999" width="2.6" height="3" transform="rotate(45)"/><rect x="-1.3" y="-6.199999999999999" width="2.6" height="3" transform="rotate(90)"/><rect x="-1.3" y="-6.199999999999999" width="2.6" height="3" transform="rotate(135)"/><rect x="-1.3" y="-6.199999999999999" width="2.6" height="3" transform="rotate(180)"/><rect x="-1.3" y="-6.199999999999999" width="2.6" height="3" transform="rotate(225)"/><rect x="-1.3" y="-6.199999999999999" width="2.6" height="3" transform="rotate(270)"/><rect x="-1.3" y="-6.199999999999999" width="2.6" height="3" transform="rotate(315)"/></g><circle r="4.6" fill="#a8a8a8"/><circle r="2.1" fill="#f4f4f4"/></g><path d="M9.5 1.5 L14.5 6.5 M14.5 1.5 L9.5 6.5" stroke="#a0a0a0" stroke-width="1.5"/><path d="M9 10 L14 12.5 L11.6 13 L13 15.5 L12 16 L10.6 13.6 L9 15 Z" fill="#a8a8a8"/></svg>
<svg style="left:762px;top:59.3px;" width="6" height="10" viewBox="0 0 6 10"><path d="M0 0 L5.5 4.8 L0 9.6 Z" fill="#9a9a9a"/></svg>
<div style="left:780px;top:60px;width:8px;height:8px;background:#9a9a9a;"></div>
<svg style="left:795.5px;top:53.5px;" width="16" height="16" viewBox="0 0 16 16"><path d="M2 2 L4.5 1 L7 3.5 L6.4 5.4 L13.5 12.5 Q14.5 14 13.2 15 Q12 15.6 11 14.4 L4.4 7.4 L2.5 8 L0.5 5.5 L3 6 L4 4.5 Z" fill="#6c6c6c"/><path d="M10 1.5 Q13 0 15 2.5 L12.8 3 L12.4 5 L14.5 5.5 Q13 7.6 10.4 6.6 L8.8 8 L7.6 6.8 L9.2 5.2 Q8.6 3 10 1.5 Z" fill="#747474"/></svg>
<div style="left:816px;top:53.5px;width:1px;height:16px;background:#b4b4b4;"></div>
<svg style="left:820.0px;top:53.5px;" width="16" height="16" viewBox="0 0 16 16"><path d="M7 5 H15 M7 7.5 H15 M7 10 H15 M7 12.5 H15" stroke="#9a9a9a" stroke-width="1"/><path d="M5 2 H2.5 V13 H5 M3.6 11.4 L5.4 13 L3.6 14.6" stroke="#9a9a9a" stroke-width="1.1" fill="none"/></svg>
<svg style="left:841.5px;top:53.5px;" width="16" height="16" viewBox="0 0 16 16"><path d="M7 5 H15 M7 7.5 H15 M7 10 H15 M7 12.5 H15" stroke="#9a9a9a" stroke-width="1"/><path d="M1 6 Q3 2 6 5 M6 5 L3.8 5.2 M6 5 L5.8 2.8" stroke="#9a9a9a" stroke-width="1.1" fill="none"/></svg>
<svg style="left:863.0px;top:53.5px;" width="16" height="16" viewBox="0 0 16 16"><path d="M7 5 H15 M7 7.5 H15 M7 10 H15 M7 12.5 H15" stroke="#9a9a9a" stroke-width="1"/><path d="M6 6 Q4 2 1 5 M1 5 L3.2 5.2 M1 5 L1.2 2.8" stroke="#9a9a9a" stroke-width="1.1" fill="none"/></svg>
<svg style="left:884.0px;top:53.5px;" width="16" height="16" viewBox="0 0 16 16"><path d="M7 5 H15 M7 7.5 H15 M7 10 H15 M7 12.5 H15" stroke="#9a9a9a" stroke-width="1"/><path d="M0.5 5 H5.5 M3.8 3.2 L5.6 5 L3.8 6.8" stroke="#9a9a9a" stroke-width="1.1" fill="none"/></svg>
<svg style="left:905.0px;top:53.5px;" width="16" height="16" viewBox="0 0 16 16"><path d="M5 3 Q10 0 10 6 Q10 9 6 10 M6 10 L8 8 M6 10 L8.4 11.6" stroke="#9a9a9a" stroke-width="1.2" fill="none"/><path d="M2 12 H9 M2 14 H9" stroke="#9a9a9a" stroke-width="1"/></svg>
<div style="left:928px;top:53.5px;width:1px;height:16px;background:#b4b4b4;"></div>
<svg style="left:933.0px;top:54.5px;" width="14" height="14" viewBox="0 0 16 16"><path d="M3 6 H8 V3.2 L13 8 L8 12.8 V10 H3 Z" fill="#f4f4f4" stroke="#505050" stroke-width="1"/></svg>
<div style="left:955px;top:53.5px;width:1px;height:16px;background:#b4b4b4;"></div>
<svg style="left:959.0px;top:53.5px;" width="16" height="16" viewBox="0 0 16 16"><rect x="1" y="2" width="14" height="11" fill="#707070"/><path d="M1 11 L15 3" stroke="#c8c8c8" stroke-width="1"/><rect x="9" y="8" width="6" height="5" fill="#909090"/><path d="M10 9.5 H14 M10 11.5 H14" stroke="#404040" stroke-width=".8"/></svg>
<div style="left:982px;top:53.5px;width:1px;height:16px;background:#b4b4b4;"></div>
<svg style="left:986.5px;top:53.5px;" width="16" height="16" viewBox="0 0 16 16"><path d="M1 3 H4 L5.5 10 H13 L14.5 5 H4.6" fill="none" stroke="#606060" stroke-width="1.1"/><path d="M5 5.2 H14 L13 9.6 H5.8 Z" fill="#7c7c7c"/><circle cx="6.5" cy="12.6" r="1.2" fill="#505050"/><circle cx="12" cy="12.6" r="1.2" fill="#505050"/><path d="M13 2 L15.5 1" stroke="#505050" stroke-width="1"/></svg>
<div style="left:1008px;top:53.5px;width:1px;height:16px;background:#b4b4b4;"></div>
<svg style="left:1013.0px;top:53.5px;" width="16" height="16" viewBox="0 0 16 16"><path d="M2 2 L6 4.5 L3 6 M6 4.5 Q3 3 2.5 7.5" stroke="#9a9a9a" stroke-width="1.1" fill="none"/><path d="M5 10 L8 13.5 L14.5 5" stroke="#9a9a9a" stroke-width="2" fill="none"/></svg>
<svg style="left:2.5px;top:77.0px;" width="16" height="16" viewBox="0 0 16 16"><rect x="1" y="1.6" width="13.4" height="9.6" fill="#f6f6f6" stroke="#202020" stroke-width="1.3"/><path d="M8 4 H12.5 M8 6 H12.5" stroke="#707070" stroke-width=".9"/><circle cx="5.4" cy="6" r="2.9" fill="#68d8f0" stroke="#104880" stroke-width=".9"/><path d="M7.6 8.4 L13 14.4" stroke="#0c1c50" stroke-width="2.6"/><path d="M7.8 8.2 L12.8 13.8" stroke="#3c78e0" stroke-width="1.1"/></svg>
<svg style="left:24.0px;top:77.0px;" width="16" height="16" viewBox="0 0 16 16"><path d="M1 3 L13.6 1.6 V11.2 L1 11.2 Z" fill="#6c6c6c" stroke="#202020" stroke-width="1.2"/><circle cx="5.6" cy="6.2" r="3" fill="#68d8f0" stroke="#104880" stroke-width=".9"/><path d="M7.8 8.6 L13.2 14.6" stroke="#0c1c50" stroke-width="2.6"/><path d="M8 8.4 L13 14" stroke="#3c78e0" stroke-width="1.1"/></svg>
<div style="left:42.8px;top:74.4px;width:21.6px;height:20.2px;background:#e6f1fb;border:1.4px solid #3d8cdc;box-sizing:border-box;"></div>
<svg style="left:45.5px;top:77.0px;" width="16" height="16" viewBox="0 0 16 16"><rect x="1.5" y="2" width="13" height="12" fill="#fff" stroke="#101060" stroke-width="1"/><rect x="1.5" y="2" width="13" height="3.2" fill="#000088"/><rect x="3" y="6" width="3" height="2" fill="#e02020"/><rect x="3" y="9" width="3" height="2" fill="#e0c000"/><rect x="3" y="11.6" width="3" height="1.6" fill="#20a020"/><path d="M7.5 6.5 H13 M7.5 8 H13 M7.5 9.6 H13 M7.5 11.2 H13 M7.5 12.8 H13 M10 5.5 V13.5" stroke="#303090" stroke-width=".7"/></svg>
<div style="left:68px;top:77px;width:1px;height:16px;background:#b4b4b4;"></div>
<svg style="left:72.0px;top:77.0px;" width="16" height="16" viewBox="0 0 16 16"><rect x="1" y="3.5" width="13.6" height="9" rx=".8" fill="#dadada" stroke="#bcbcbc" stroke-width="1"/><path d="M3 5.5 H12.6 M3 7.5 H12.6 M3 9.5 H12.6 M5.4 4.5 V11.5 M7.8 4.5 V11.5 M10.2 4.5 V11.5" stroke="#e6e6e6" stroke-width=".6"/></svg>
<div style="left:94px;top:77px;width:1px;height:16px;background:#b4b4b4;"></div>
<svg style="left:97.5px;top:77.0px;" width="16" height="16" viewBox="0 0 16 16"><rect x="2" y="6" width="11" height="8" fill="#8c8c8c"/><rect x="3" y="2" width="3" height="4" fill="#8c8c8c"/><rect x="9" y="2" width="3" height="4" fill="#8c8c8c"/><rect x="4.5" y="8" width="6" height="3" fill="#d0d0d0"/></svg>
<svg style="left:119.0px;top:77.0px;" width="16" height="16" viewBox="0 0 16 16"><rect x="2" y="6" width="11" height="8" fill="#8c8c8c"/><rect x="3" y="2" width="3" height="4" fill="#8c8c8c"/><rect x="9" y="2" width="3" height="4" fill="#8c8c8c"/><rect x="4.5" y="8" width="6" height="3" fill="#d0d0d0"/><path d="M12 1 L15 4" stroke="#9a9a9a" stroke-width="1"/></svg>
<div style="left:141px;top:77px;width:1px;height:16px;background:#b4b4b4;"></div>
<svg style="left:146.0px;top:77.0px;" width="16" height="16" viewBox="0 0 16 16"><path d="M2.5 1 V15" stroke="#848484" stroke-width="1.3"/><rect x="4.5" y="3" width="8" height="3.5" fill="#fff" stroke="#848484"/><rect x="4.5" y="9.5" width="5" height="3.5" fill="#fff" stroke="#848484"/></svg>
<svg style="left:167.5px;top:77.0px;" width="16" height="16" viewBox="0 0 16 16"><path d="M8 1 V15" stroke="#848484" stroke-width="1.1"/><rect x="5.5" y="3.5" width="5" height="9" fill="#fff" stroke="#848484"/><path d="M1 8 H5 M11 8 H15 M3.4 6.4 L5 8 L3.4 9.6 M12.6 6.4 L11 8 L12.6 9.6" stroke="#848484" stroke-width="1" fill="none"/></svg>
<svg style="left:188.5px;top:77.0px;" width="16" height="16" viewBox="0 0 16 16"><path d="M13.5 1 V15" stroke="#848484" stroke-width="1.3"/><rect x="3.5" y="3" width="8" height="3.5" fill="#fff" stroke="#848484"/><rect x="6.5" y="9.5" width="5" height="3.5" fill="#fff" stroke="#848484"/></svg>
<div style="left:210px;top:77px;width:1px;height:16px;background:#b4b4b4;"></div>
<svg style="left:214.5px;top:77.0px;" width="16" height="16" viewBox="0 0 16 16"><path d="M1 2.5 H15" stroke="#848484" stroke-width="1.3"/><rect x="3" y="4.5" width="3.5" height="8" fill="#fff" stroke="#848484"/><rect x="9.5" y="4.5" width="3.5" height="5" fill="#fff" stroke="#848484"/></svg>
<svg style="left:236.5px;top:77.0px;" width="16" height="16" viewBox="0 0 16 16"><path d="M1 8.5 H15" stroke="#848484" stroke-width="1.1"/><rect x="4.5" y="6" width="7" height="5" fill="#fff" stroke="#848484"/><path d="M8 1 V5 M6.4 3.4 L8 5 L9.6 3.4 M8 15 V12" stroke="#848484" stroke-width="1" fill="none"/></svg>
<svg style="left:257.0px;top:77.0px;" width="16" height="16" viewBox="0 0 16 16"><path d="M1 13.5 H15" stroke="#848484" stroke-width="1.3"/><rect x="3" y="3.5" width="3.5" height="8" fill="#fff" stroke="#848484"/><rect x="9.5" y="6.5" width="3.5" height="5" fill="#fff" stroke="#848484"/></svg>
<svg style="left:278.0px;top:77.0px;" width="16" height="16" viewBox="0 0 16 16"><rect x="1.5" y="2" width="13" height="12" fill="#d8d8d8" stroke="#848484"/><rect x="3" y="3.5" width="6" height="5" fill="#a8a8a8"/><rect x="8" y="8" width="6.5" height="6" fill="#909090"/></svg>
<div style="left:300px;top:77px;width:1px;height:16px;background:#b4b4b4;"></div>
<svg style="left:305.0px;top:77.0px;" width="16" height="16" viewBox="0 0 16 16"><rect x="1" y="5.5" width="2.4" height="4" fill="#fff" stroke="#848484" stroke-width="1.05"/><rect x="6" y="3.5" width="3.6" height="8" fill="#fff" stroke="#848484" stroke-width="1.05"/><rect x="12.4" y="5.5" width="2.4" height="4" fill="#fff" stroke="#848484" stroke-width="1.05"/><path d="M3.4 7.5 H6 M9.6 7.5 H12.4" stroke="#848484" stroke-width="1.05"/></svg>
<svg style="left:327.0px;top:77.0px;" width="16" height="16" viewBox="0 0 16 16"><rect x="1" y="5.5" width="2.4" height="4" fill="#fff" stroke="#848484" stroke-width="1.05"/><rect x="6" y="3.5" width="3.6" height="8" fill="#fff" stroke="#848484" stroke-width="1.05"/><rect x="12.4" y="5.5" width="2.4" height="4" fill="#fff" stroke="#848484" stroke-width="1.05"/><path d="M1 14 H7 M9 14 H15 M2.6 12.6 L1 14 L2.6 15.4 M13.4 12.6 L15 14 L13.4 15.4" stroke="#848484" stroke-width="1.05" fill="none"/></svg>
<svg style="left:347.0px;top:77.0px;" width="16" height="16" viewBox="0 0 16 16"><rect x="1" y="5.5" width="2.4" height="4" fill="#fff" stroke="#848484" stroke-width="1.05"/><rect x="6" y="3.5" width="3.6" height="8" fill="#fff" stroke="#848484" stroke-width="1.05"/><rect x="12.4" y="5.5" width="2.4" height="4" fill="#fff" stroke="#848484" stroke-width="1.05"/><path d="M1 14 H7 M9 14 H15 M5.4 12.6 L7 14 L5.4 15.4 M10.6 12.6 L9 14 L10.6 15.4" stroke="#848484" stroke-width="1.05" fill="none"/></svg>
<svg style="left:369.0px;top:77.0px;" width="16" height="16" viewBox="0 0 16 16"><rect x="1" y="5.5" width="2.4" height="4" fill="#fff" stroke="#848484" stroke-width="1.05"/><rect x="6" y="3.5" width="3.6" height="8" fill="#fff" stroke="#848484" stroke-width="1.05"/><rect x="12.4" y="5.5" width="2.4" height="4" fill="#fff" stroke="#848484" stroke-width="1.05"/><path d="M4 14 H12 M5.6 12.6 L4 14 L5.6 15.4 M10.4 12.6 L12 14 L10.4 15.4" stroke="#848484" stroke-width="1.05" fill="none"/></svg>
<div style="left:390px;top:77px;width:1px;height:16px;background:#b4b4b4;"></div>
<svg style="left:396.0px;top:77.0px;" width="16" height="16" viewBox="0 0 16 16"><rect x="4.5" y="1" width="4" height="2.6" fill="#fff" stroke="#848484" stroke-width="1.05"/><rect x="3" y="6" width="7" height="3.6" fill="#fff" stroke="#848484" stroke-width="1.05"/><rect x="4.5" y="12.2" width="4" height="2.6" fill="#fff" stroke="#848484" stroke-width="1.05"/><path d="M6.5 3.6 V6 M6.5 9.6 V12.2" stroke="#848484" stroke-width="1.05"/></svg>
<svg style="left:417.0px;top:77.0px;" width="16" height="16" viewBox="0 0 16 16"><rect x="4.5" y="1" width="4" height="2.6" fill="#fff" stroke="#848484" stroke-width="1.05"/><rect x="3" y="6" width="7" height="3.6" fill="#fff" stroke="#848484" stroke-width="1.05"/><rect x="4.5" y="12.2" width="4" height="2.6" fill="#fff" stroke="#848484" stroke-width="1.05"/><path d="M6.5 3.6 V6 M6.5 9.6 V12.2" stroke="#848484" stroke-width="1.05"/><path d="M13.5 1 V7 M13.5 9 V15 M12.1 2.6 L13.5 1 L14.9 2.6 M12.1 13.4 L13.5 15 L14.9 13.4" stroke="#848484" stroke-width="1.05" fill="none"/></svg>
<svg style="left:438.0px;top:77.0px;" width="16" height="16" viewBox="0 0 16 16"><rect x="4.5" y="1" width="4" height="2.6" fill="#fff" stroke="#848484" stroke-width="1.05"/><rect x="3" y="6" width="7" height="3.6" fill="#fff" stroke="#848484" stroke-width="1.05"/><rect x="4.5" y="12.2" width="4" height="2.6" fill="#fff" stroke="#848484" stroke-width="1.05"/><path d="M6.5 3.6 V6 M6.5 9.6 V12.2" stroke="#848484" stroke-width="1.05"/><path d="M13.5 1 V7 M13.5 9 V15 M12.1 5.4 L13.5 7 L14.9 5.4 M12.1 10.6 L13.5 9 L14.9 10.6" stroke="#848484" stroke-width="1.05" fill="none"/></svg>
<svg style="left:459.0px;top:77.0px;" width="16" height="16" viewBox="0 0 16 16"><rect x="4.5" y="1" width="4" height="2.6" fill="#fff" stroke="#848484" stroke-width="1.05"/><rect x="3" y="6" width="7" height="3.6" fill="#fff" stroke="#848484" stroke-width="1.05"/><rect x="4.5" y="12.2" width="4" height="2.6" fill="#fff" stroke="#848484" stroke-width="1.05"/><path d="M6.5 3.6 V6 M6.5 9.6 V12.2" stroke="#848484" stroke-width="1.05"/><path d="M13.5 4 V12 M12.1 5.6 L13.5 4 L14.9 5.6 M12.1 10.4 L13.5 12 L14.9 10.4" stroke="#848484" stroke-width="1.05" fill="none"/></svg>
<div style="left:481px;top:77px;width:1px;height:16px;background:#b4b4b4;"></div>
<svg style="left:486.0px;top:77.0px;" width="16" height="16" viewBox="0 0 16 16"><path d="M1.5 8 V2.5 H14.5 V8" stroke="#848484" stroke-width="1" fill="none"/><path d="M1.5 11 H4 M12 11 H14.5" stroke="#848484" stroke-width="1" fill="none"/><rect x="5" y="9" width="6" height="4.5" fill="#fff" stroke="#848484"/><path d="M2.6 9.8 L1 11 L2.6 12.4 M13.4 9.8 L15 11 L13.4 12.4" stroke="#848484" stroke-width="1" fill="none"/></svg>
<svg style="left:507.0px;top:77.0px;" width="16" height="16" viewBox="0 0 16 16"><rect x="8" y="2" width="5.5" height="12" fill="#fff" stroke="#848484"/><path d="M3.5 1 V15 M2 2.6 L3.5 1 L5 2.6 M2 13.4 L3.5 15 L5 13.4" stroke="#848484" stroke-width="1" fill="none"/><rect x="2" y="6" width="3" height="4" fill="#f0f0f0" stroke="#848484" stroke-width=".8"/></svg>
<svg style="left:528.0px;top:77.0px;" width="16" height="16" viewBox="0 0 16 16"><rect x="1.5" y="1.5" width="13" height="13" stroke="#848484" stroke-width="1" fill="none" stroke-dasharray="2.5 2"/><rect x="6" y="6" width="4" height="4" fill="#fff" stroke="#848484"/><path d="M8 3 V5.5 M8 10.5 V13 M3 8 H5.5 M10.5 8 H13" stroke="#848484" stroke-width="1" fill="none"/></svg>
<svg style="left:549.0px;top:77.0px;" width="16" height="16" viewBox="0 0 16 16"><rect x="4.5" y="4.5" width="7" height="7" fill="#b8b8b8" stroke="#848484"/><path d="M1 4.5 H15 M1 11.5 H15 M4.5 1 V15 M11.5 1 V15" stroke="#848484" stroke-width="1" fill="none" stroke-dasharray="1.5 1.5"/></svg>
<div style="left:571px;top:77px;width:1px;height:16px;background:#b4b4b4;"></div>
<svg style="left:575.5px;top:77.0px;" width="16" height="16" viewBox="0 0 16 16"><rect x="1.5" y="1.5" width="8" height="8" fill="#fff" stroke="#727272" stroke-width="1.1"/><rect x="6" y="6" width="8.5" height="8.5" fill="#c4c4c4" stroke="#727272" stroke-width="1.1"/></svg>
<svg style="left:597.0px;top:77.0px;" width="16" height="16" viewBox="0 0 16 16"><rect x="5" y="5" width="9.5" height="9.5" fill="#c4c4c4" stroke="#727272" stroke-width="1.1"/><rect x="1.5" y="1.5" width="10" height="9" fill="#fff" stroke="#727272" stroke-width="1.1"/></svg>
<svg style="left:618.0px;top:77.0px;" width="16" height="16" viewBox="0 0 16 16"><rect x="1.5" y="1.5" width="9" height="8" fill="#fff" stroke="#727272" stroke-width="1.1"/><rect x="5.5" y="6" width="9" height="8.5" fill="#b4b4b4" stroke="#727272" stroke-width="1.1"/><rect x="5.5" y="6" width="5" height="3.5" fill="#dcdcdc"/></svg>
<svg style="left:639.0px;top:77.0px;" width="16" height="16" viewBox="0 0 16 16"><rect x="1.5" y="1" width="7" height="6" fill="#fff" stroke="#727272" stroke-width="1.1"/><rect x="5" y="4.5" width="7" height="6" fill="#a0a0a0" stroke="#727272" stroke-width="1.1"/><rect x="8.5" y="8.5" width="6.5" height="6" fill="#fff" stroke="#727272" stroke-width="1.1"/></svg>
<div style="left:661px;top:77px;width:1px;height:16px;background:#b4b4b4;"></div>
<svg style="left:666.0px;top:77.0px;" width="16" height="16" viewBox="0 0 16 16"><rect x="1.5" y="1.5" width="13" height="13" stroke="#848484" stroke-width="1" fill="none" stroke-dasharray="2 1.6"/><path d="M4 9 Q4 5 8 6 L12 8 Q13.5 11 10 12.5 L5 12.5 Z" fill="#a0a0a0"/></svg>
<svg style="left:687.0px;top:77.0px;" width="16" height="16" viewBox="0 0 16 16"><rect x="1.5" y="1.5" width="13" height="13" stroke="#848484" stroke-width="1" fill="none" stroke-dasharray="2 1.6"/><path d="M4 9 Q4 5 8 6 L12 8 Q13.5 11 10 12.5 L5 12.5 Z" fill="#a0a0a0"/><path d="M1 1 L15 15 M15 1 L1 15" stroke="#b0b0b0" stroke-width=".8" stroke-dasharray="1.5 1.5"/></svg>
<div style="left:298px;top:98px;width:1097px;height:20px;background:#f0f0f0;"></div>
<svg style="left:298px;top:97px;" width="150" height="20" viewBox="0 0 150 20"><path d="M1 18.5 L4 17.5 L14 2.5 Q15 1.5 17 1.5 H144 Q147 1.5 147 4.5 V18.5 Z" fill="#fcfcfc" stroke="#a8a8a8" stroke-width="1"/></svg>
<svg style="left:445px;top:97px;" width="100" height="20" viewBox="0 0 100 20"><path d="M2.5 18.5 V6 Q3 4 5 3 Q7 1.5 9 1.5 H94 Q97 1.5 97 4.5 V18.5" fill="#f4f4f4" stroke="#b0b0b0" stroke-width="1"/></svg>
<svg style="left:541px;top:97px;" width="138" height="20" viewBox="0 0 138 20"><path d="M2.5 18.5 V6 Q3 4 5 3 Q7 1.5 9 1.5 H132 Q135 1.5 135 4.5 V18.5" fill="#f4f4f4" stroke="#b0b0b0" stroke-width="1"/></svg>
<div style="left:298px;top:115.4px;width:1097px;height:1px;background:#acacac;"></div>
<div style="left:301px;top:115.4px;width:144.5px;height:1.2px;background:#fcfcfc;"></div>
<svg style="left:315px;top:101.5px;" width="14.5" height="14.5" viewBox="0 0 16 16"><path d="M2.7 1.5 H10.4 L13.5 4.6 V14.6 H2.7 Z" fill="#fff" stroke="#303030" stroke-width="0.9"/><path d="M10.4 1.5 V4.6 H13.5" fill="#e4e4e4" stroke="#303030" stroke-width="0.8"/><path d="M3.4 15.5 H14.4 V5.4" stroke="#505050" stroke-width="1" fill="none"/><g transform="translate(-0.8,0)"><path d="M11 6.5 H13 M11 8.5 H13 M11 10.5 H13 M6 13 H13" stroke="#b8b8b8" stroke-width=".8"/><rect x="5" y="2.6" width="5.6" height="5.2" fill="#e01818" stroke="#700000" stroke-width="0.6"/><rect x="6.6" y="3.8" width="2.6" height="2.4" fill="#ffe820"/><rect x="6.6" y="7.8" width="4" height="4.8" fill="#e8207c" stroke="#600030" stroke-width="0.6"/><rect x="6.6" y="11" width="4" height="1.6" fill="#2020c0"/><rect x="0.6" y="7" width="5.6" height="5" rx="0.8" fill="#38c820" stroke="#186000" stroke-width="0.7"/><rect x="2" y="8.2" width="2.6" height="2.6" fill="#f4f440"/></g></svg>
<span class="t" style="left:336.50px;top:101px;font-size:11px;line-height:12px;color:#000;font-weight:700;transform:scaleX(1.0076);">ProcessImage02</span>
<svg style="left:433px;top:104.5px;" width="8" height="8" viewBox="0 0 8 8"><path d="M1 1 L7 7 M7 1 L1 7" stroke="#000" stroke-width="1.8"/></svg>
<svg style="left:450.8px;top:100.6px;" width="14.5" height="14.5" viewBox="0 0 16 16"><path d="M2.7 1.5 H10.4 L13.5 4.6 V14.6 H2.7 Z" fill="#fff" stroke="#303030" stroke-width="0.9"/><path d="M10.4 1.5 V4.6 H13.5" fill="#e4e4e4" stroke="#303030" stroke-width="0.8"/><path d="M3.4 15.5 H14.4 V5.4" stroke="#505050" stroke-width="1" fill="none"/><path d="M5.2 6.5 H10.8 M5.2 9 H10.8 M5.2 11.1 H10.8 M5.2 13.1 H10.8" stroke="#3434ff" stroke-width="1.3"/><path d="M5.2 4.1 H8.6" stroke="#3434ff" stroke-width="1.3"/></svg>
<span class="t" style="left:473.50px;top:101px;font-size:11px;line-height:12px;color:#000;transform:scaleX(0.8470);">PLC_Main</span>
<svg style="left:548px;top:101px;" width="15.5" height="15.5" viewBox="0 0 16 16"><path d="M1 5.4 L3.6 1.6 L5.6 2.6 L5.6 15 H1 Z" fill="#00b8c0" stroke="#000" stroke-width="0.9"/><path d="M3.6 1.6 L5 0.6 L7 1.8 L5.6 2.6" fill="#60e8f0" stroke="#000" stroke-width="0.7"/><path d="M5.6 5.6 L7.6 3.6 L9.6 5 V15 H5.6 Z" fill="#e80000" stroke="#000" stroke-width="0.9"/><path d="M9.6 4.8 L12.4 3.2 L15.2 4.4 V13.4 L12.6 15 H9.6 Z" fill="#e8e800" stroke="#000" stroke-width="0.9"/><path d="M12.6 5.6 V15 M12.6 5.6 L15.2 4.4 M9.6 4.8 L12.6 5.6" stroke="#000" stroke-width="0.7" fill="none"/><path d="M12.9 6 L14.9 5 V13.2 L12.9 14.4 Z" fill="#a0a000"/></svg>
<span class="t" style="left:574.00px;top:101px;font-size:11px;line-height:12px;color:#000;transform:scaleX(0.9052);">Library Manager</span>
<svg style="left:1382px;top:105px;" width="9" height="6" viewBox="0 0 9 6"><path d="M0 0 H8.6 L4.3 4.6 Z" fill="#000"/></svg>
<div style="left:299px;top:118px;width:1095px;height:21px;background:#f0f0f0;"></div>
<div style="left:299px;top:117.6px;width:1095px;height:1px;background:#e2e2e2;"></div>
<div style="left:529px;top:119px;width:87px;height:20px;background:#ffffff;"></div>
<div style="left:529px;top:119px;width:1px;height:20px;background:#d0d0d0;"></div>
<div style="left:615.5px;top:119px;width:1px;height:20px;background:#c0c0c0;"></div>
<div style="left:399.5px;top:121px;width:1px;height:17px;background:#dcdcdc;"></div>
<div style="left:528px;top:121px;width:1px;height:17px;background:#dcdcdc;"></div>
<div style="left:731.5px;top:121px;width:1px;height:17px;background:#dcdcdc;"></div>
<svg style="left:306px;top:122.5px;" width="14" height="10" viewBox="0 0 14 10"><rect x="0.6" y="0.6" width="12.8" height="8.8" fill="#fff" stroke="#303030" stroke-width="1.2"/><path d="M2.5 3.5 H6 M8 3.5 H11.5 M2.5 6 H6 M8 6 H11.5" stroke="#303030" stroke-width="1.3"/></svg>
<span class="t" style="left:324.50px;top:123px;font-size:11px;line-height:12px;color:#000;transform:scaleX(0.9317);">Interface Editor</span>
<svg style="left:406px;top:122.5px;" width="14" height="10" viewBox="0 0 14 10"><rect x="0.6" y="0.6" width="12.8" height="8.8" rx="1.2" fill="#e4e4e4" stroke="#303030" stroke-width="1.2"/><rect x="2.2" y="2.2" width="9.6" height="5" fill="#f8f8f8" stroke="#b0b0b0" stroke-width=".6"/></svg>
<span class="t" style="left:425.00px;top:123px;font-size:11px;line-height:12px;color:#000;transform:scaleX(0.9148);">Hotkeys Configuration</span>
<svg style="left:537px;top:121.5px;" width="13" height="11" viewBox="0 0 13 11"><rect x="0.5" y="0.5" width="12" height="10" fill="#fff" stroke="#202060" stroke-width="1"/><rect x="0.5" y="0.5" width="12" height="2.6" fill="#2030a0"/><rect x="2" y="4" width="2.6" height="1.8" fill="#e02020"/><rect x="2" y="6.4" width="2.6" height="1.6" fill="#e0c000"/><rect x="2" y="8.4" width="2.6" height="1.4" fill="#20a020"/><path d="M6 4.6 H11.5 M6 6.4 H11.5 M6 8.2 H11.5 M8.6 3.5 V10" stroke="#303090" stroke-width=".8"/></svg>
<span class="t" style="left:555.00px;top:122px;font-size:11px;line-height:12px;color:#000;transform:scaleX(0.8756);">Element List</span>
<svg style="left:620.5px;top:122.5px;" width="14" height="10" viewBox="0 0 14 10"><rect x="0.6" y="0.6" width="12.8" height="8.8" fill="#fff" stroke="#303030" stroke-width="1.2"/><path d="M2.5 3.5 H6 M8 3.5 H11.5 M2.5 6 H6 M8 6 H11.5" stroke="#303030" stroke-width="1.3"/></svg>
<span class="t" style="left:638.50px;top:123px;font-size:11px;line-height:12px;color:#000;transform:scaleX(0.9098);">Frame configuration</span>
<div style="left:302px;top:139.5px;width:1089.5px;height:174px;background:#ffffff;border:1px solid #a0a7b0;box-sizing:border-box;"></div>
<span class="t" style="left:309.30px;top:145px;font-size:11px;line-height:12px;color:#000;transform:scaleX(0.9057);">Type</span>
<span class="t" style="left:491.60px;top:145px;font-size:11px;line-height:12px;color:#000;transform:scaleX(0.8177);">X</span>
<span class="t" style="left:537.80px;top:145px;font-size:11px;line-height:12px;color:#000;transform:scaleX(0.8177);">Y</span>
<span class="t" style="left:584.30px;top:145px;font-size:11px;line-height:12px;color:#000;transform:scaleX(1.0492);">Width</span>
<span class="t" style="left:630.60px;top:145px;font-size:11px;line-height:12px;color:#000;transform:scaleX(1.0378);">Height</span>
<span class="t" style="left:676.30px;top:145px;font-size:11px;line-height:12px;color:#000;transform:scaleX(0.8636);">ID</span>
<span class="t" style="left:722.50px;top:145px;font-size:11px;line-height:12px;color:#000;transform:scaleX(1.0224);">Name</span>
<span class="t" style="left:829.50px;top:145px;font-size:11px;line-height:12px;color:#000;transform:scaleX(0.9428);">Acce...</span>
<span class="t" style="left:874.80px;top:145px;font-size:11px;line-height:12px;color:#000;transform:scaleX(0.9548);">Tab Order</span>
<div style="left:487px;top:141px;width:1px;height:73.5px;background:#e4e4e4;"></div>
<div style="left:533px;top:141px;width:1px;height:73.5px;background:#e4e4e4;"></div>
<div style="left:579px;top:141px;width:1px;height:73.5px;background:#e4e4e4;"></div>
<div style="left:625px;top:141px;width:1px;height:73.5px;background:#e4e4e4;"></div>
<div style="left:671px;top:141px;width:1px;height:73.5px;background:#e4e4e4;"></div>
<div style="left:716px;top:141px;width:1px;height:73.5px;background:#e4e4e4;"></div>
<div style="left:822px;top:141px;width:1px;height:73.5px;background:#e4e4e4;"></div>
<div style="left:868px;top:141px;width:1px;height:73.5px;background:#e4e4e4;"></div>
<div style="left:1053px;top:141px;width:1px;height:73.5px;background:#e4e4e4;"></div>
<div style="left:303px;top:198.5px;width:750px;height:16.5px;background:#f0f0f0;"></div>
<div style="left:303px;top:163px;width:750px;height:1px;background:#ececec;"></div>
<div style="left:303px;top:180.5px;width:750px;height:1px;background:#ececec;"></div>
<div style="left:303px;top:198px;width:750px;height:1px;background:#ececec;"></div>
<div style="left:303px;top:215px;width:750px;height:1px;background:#ececec;"></div>
<svg style="left:323.5px;top:165.4px;" width="15" height="11.5" viewBox="0 0 15 11.5"><defs><linearGradient id="rg" x1="0" y1="0" x2="1" y2="0"><stop offset="0" stop-color="#4c4c4c"/><stop offset="1" stop-color="#a4a4a4"/></linearGradient></defs><rect x="0" y="0" width="15" height="11.5" fill="url(#rg)"/></svg>
<span class="t" style="left:344.50px;top:166px;font-size:11px;line-height:12px;color:#000;transform:scaleX(0.9101);">#0 Rectangle</span>
<span class="t" style="left:491.30px;top:166px;font-size:11px;line-height:12px;color:#000;transform:scaleX(0.8820);">0</span>
<span class="t" style="left:537.60px;top:166px;font-size:11px;line-height:12px;color:#000;transform:scaleX(0.8820);">0</span>
<span class="t" style="left:583.80px;top:166px;font-size:11px;line-height:12px;color:#000;transform:scaleX(0.8820);">1280</span>
<span class="t" style="left:630.00px;top:166px;font-size:11px;line-height:12px;color:#000;transform:scaleX(0.8820);">680</span>
<span class="t" style="left:675.80px;top:166px;font-size:11px;line-height:12px;color:#000;transform:scaleX(0.8820);">4</span>
<span class="t" style="left:720.80px;top:166px;font-size:11px;line-height:12px;color:#000;transform:scaleX(0.8824);">GenElemInst_6</span>
<span class="t" style="left:873.00px;top:166px;font-size:11px;line-height:12px;color:#000;transform:scaleX(0.8820);">0</span>
<svg style="left:323.5px;top:182.9px;" width="15" height="11.5" viewBox="0 0 15 11.5"><defs><linearGradient id="rg" x1="0" y1="0" x2="1" y2="0"><stop offset="0" stop-color="#4c4c4c"/><stop offset="1" stop-color="#a4a4a4"/></linearGradient></defs><rect x="0" y="0" width="15" height="11.5" fill="url(#rg)"/></svg>
<span class="t" style="left:344.50px;top:183px;font-size:11px;line-height:12px;color:#000;transform:scaleX(0.9101);">#1 Rectangle</span>
<span class="t" style="left:491.30px;top:183px;font-size:11px;line-height:12px;color:#000;transform:scaleX(0.8820);">465</span>
<span class="t" style="left:537.60px;top:183px;font-size:11px;line-height:12px;color:#000;transform:scaleX(0.8820);">10</span>
<span class="t" style="left:583.80px;top:183px;font-size:11px;line-height:12px;color:#000;transform:scaleX(0.8820);">350</span>
<span class="t" style="left:630.00px;top:183px;font-size:11px;line-height:12px;color:#000;transform:scaleX(0.8820);">70</span>
<span class="t" style="left:675.80px;top:183px;font-size:11px;line-height:12px;color:#000;transform:scaleX(0.8820);">7</span>
<span class="t" style="left:720.80px;top:183px;font-size:11px;line-height:12px;color:#000;transform:scaleX(0.8824);">GenElemInst_8</span>
<span class="t" style="left:873.00px;top:183px;font-size:11px;line-height:12px;color:#000;transform:scaleX(0.8820);">1</span>
<svg style="left:323.5px;top:199.8px;" width="15" height="13" viewBox="0 0 15 13"><path d="M0.5 12.5 V0.5 H14" stroke="#909090" stroke-width="1" fill="none"/><path d="M5 4.5 L2.5 7.5 L5 10.5 M10 4.5 L12.5 7.5 L10 10.5" stroke="#505050" stroke-width="1" fill="none"/><circle cx="7.5" cy="7.5" r=".8" fill="#505050"/></svg>
<span class="t" style="left:344.50px;top:201px;font-size:11px;line-height:12px;color:#000;transform:scaleX(0.9028);">#2 Frame</span>
<span class="t" style="left:491.30px;top:201px;font-size:11px;line-height:12px;color:#000;transform:scaleX(0.8820);">58</span>
<span class="t" style="left:537.60px;top:201px;font-size:11px;line-height:12px;color:#000;transform:scaleX(0.8820);">126</span>
<span class="t" style="left:583.80px;top:201px;font-size:11px;line-height:12px;color:#000;transform:scaleX(0.8820);">206</span>
<span class="t" style="left:630.00px;top:201px;font-size:11px;line-height:12px;color:#000;transform:scaleX(0.8820);">52</span>
<span class="t" style="left:675.80px;top:201px;font-size:11px;line-height:12px;color:#000;transform:scaleX(0.8820);">52</span>
<span class="t" style="left:720.80px;top:201px;font-size:11px;line-height:12px;color:#000;transform:scaleX(0.8812);">GenElemInst_65</span>
<span class="t" style="left:873.00px;top:201px;font-size:11px;line-height:12px;color:#000;transform:scaleX(0.8820);">2</span>
<div style="left:298px;top:314px;width:1097px;height:3px;background:#f0f0f0;"></div>
<div style="left:298px;top:317px;width:1096px;height:1px;background:#b0b0b0;"></div>
<div style="left:298px;top:318px;width:1097px;height:3.5px;background:#fafafa;"></div>
<div style="left:298px;top:321.5px;width:1097px;height:1px;background:#c8c8c8;"></div>
<svg style="left:836px;top:317.5px;" width="8" height="5" viewBox="0 0 8 5"><path d="M0 4.5 L3.5 0.5 L7 4.5 Z" fill="#808080"/></svg>
<svg style="left:850px;top:317.5px;" width="8" height="5" viewBox="0 0 8 5"><path d="M0 0.5 L3.5 4.5 L7 0.5 Z" fill="#808080"/></svg>
<div style="left:298px;top:322.5px;width:1082px;height:625.5px;background:#f0f1f0;"></div>
<div style="left:298px;top:948px;width:1082px;height:118.2px;background:#808080;"></div>
<div style="left:1380px;top:322.5px;width:15px;height:744px;background:#f0f0f0;"></div>
<div style="left:1381px;top:338px;width:13.5px;height:240px;background:#cdcdcd;"></div>
<svg style="left:1383px;top:327px;" width="9" height="7" viewBox="0 0 9 7"><path d="M1 5.5 L4.5 1.5 L8 5.5" stroke="#404040" stroke-width="1.6" fill="none"/></svg>
<svg style="left:1383px;top:1056.5px;" width="9" height="7" viewBox="0 0 9 7"><path d="M1 1.5 L4.5 5.5 L8 1.5" stroke="#404040" stroke-width="1.6" fill="none"/></svg>
<div style="left:298px;top:1066.2px;width:1097px;height:16.4px;background:#f0f0f0;"></div>
<div style="left:314px;top:1067.6px;width:385px;height:13.6px;background:#cdcdcd;"></div>
<svg style="left:302px;top:1069.6px;" width="8" height="10" viewBox="0 0 8 10"><path d="M6 1 L2 5 L6 9" stroke="#404040" stroke-width="1.6" fill="none"/></svg>
<svg style="left:1367.5px;top:1069.6px;" width="8" height="10" viewBox="0 0 8 10"><path d="M2 1 L6 5 L2 9" stroke="#404040" stroke-width="1.6" fill="none"/></svg>
<div style="left:1319.6px;top:1049.6px;width:40.4px;height:16.4px;background:#ffffff;border:1px solid #b8b8b8;box-sizing:border-box;"></div>
<span class="t" style="left:1326.40px;top:1052px;font-size:10.5px;line-height:12px;color:#000;transform:scaleX(0.8599);">100 %</span>
<div style="left:1360.4px;top:1049.6px;width:18.6px;height:16.4px;background:#f0f0f0;border:1px solid #b0b0b0;box-sizing:border-box;"></div>
<svg style="left:1362.5px;top:1051px;" width="15" height="14" viewBox="0 0 15 14"><rect x="1" y="2" width="7" height="9" fill="#fff" stroke="#303030" stroke-width=".9"/><circle cx="7.5" cy="6" r="3.4" fill="#b0f0e8" stroke="#101010" stroke-width="1.1"/><path d="M10 8.6 L13.6 12.6" stroke="#101010" stroke-width="2"/></svg>
<span class="t" style="left:863.35px;top:344px;font-size:37px;line-height:41px;color:#000;font-weight:700;transform:scaleX(0.8845);">%s</span>
<div style="left:351.7px;top:438.8px;width:190px;height:47.7px;background:#ffffff;border:1px solid #b4b4b4;box-sizing:border-box;"></div>
<span class="t" style="left:354.30px;top:452px;font-size:16px;line-height:17px;color:#1f5ca4;transform:scaleX(0.9448);">%s</span>
<svg style="left:416px;top:448px;" width="9" height="9" viewBox="0 0 9 9"><circle cx="4.5" cy="4.5" r="4.3" fill="#101010"/><path d="M2.2 4.5 H6.8 M4.5 2.2 V6.8" stroke="#fff" stroke-width="1.2"/></svg>
<svg style="left:519px;top:455px;" width="10" height="10.5" viewBox="0 0 10 10.5"><path d="M0.3 0.3 H9.7 V5 Q9.2 8.4 5 10.2 Q0.8 8.4 0.3 5 Z" fill="#0c4088"/><path d="M2.4 4.3 H7.6 M5 1.8 V6.8" stroke="#fff" stroke-width="1.5"/></svg>
<div style="left:352px;top:534px;width:142px;height:1px;background:#cfcfcf;"></div>
<div style="left:352px;top:535px;width:142px;height:1px;background:#f8f8f8;"></div>
<svg style="left:360.2px;top:496.8px;" width="29" height="25.4" viewBox="0 0 29 25.4"><rect x="1" y="1" width="27" height="23.4" rx="3" fill="#fff" stroke="#1b5499" stroke-width="1.7"/><path d="M3.9 11.2 L11.6 18 L24 7.2" stroke="#0f4288" stroke-width="3" fill="none"/></svg>
<span class="t" style="left:404.50px;top:498px;font-size:15.5px;line-height:17px;color:#44474a;">%s</span>
<div style="left:352px;top:582px;width:142px;height:1px;background:#cfcfcf;"></div>
<div style="left:352px;top:583px;width:142px;height:1px;background:#f8f8f8;"></div>
<svg style="left:360.2px;top:544.6px;" width="29" height="25.4" viewBox="0 0 29 25.4"><rect x="1" y="1" width="27" height="23.4" rx="3" fill="#fff" stroke="#1b5499" stroke-width="1.7"/><path d="M3.9 11.2 L11.6 18 L24 7.2" stroke="#0f4288" stroke-width="3" fill="none"/></svg>
<span class="t" style="left:404.50px;top:546px;font-size:15.5px;line-height:17px;color:#44474a;">%s</span>
<div style="left:352px;top:630px;width:142px;height:1px;background:#cfcfcf;"></div>
<div style="left:352px;top:631px;width:142px;height:1px;background:#f8f8f8;"></div>
<svg style="left:360.2px;top:592.5px;" width="29" height="25.4" viewBox="0 0 29 25.4"><rect x="1" y="1" width="27" height="23.4" rx="3" fill="#fff" stroke="#1b5499" stroke-width="1.7"/><path d="M3.9 11.2 L11.6 18 L24 7.2" stroke="#0f4288" stroke-width="3" fill="none"/></svg>
<span class="t" style="left:404.50px;top:593px;font-size:15.5px;line-height:17px;color:#44474a;">%s</span>
<div style="left:352px;top:677px;width:142px;height:1px;background:#cfcfcf;"></div>
<div style="left:352px;top:678px;width:142px;height:1px;background:#f8f8f8;"></div>
<svg style="left:360.2px;top:640.3px;" width="29" height="25.4" viewBox="0 0 29 25.4"><rect x="1" y="1" width="27" height="23.4" rx="3" fill="#fff" stroke="#1b5499" stroke-width="1.7"/><path d="M3.9 11.2 L11.6 18 L24 7.2" stroke="#0f4288" stroke-width="3" fill="none"/></svg>
<span class="t" style="left:404.50px;top:641px;font-size:15.5px;line-height:17px;color:#44474a;">%s</span>
<div style="left:352px;top:725px;width:142px;height:1px;background:#cfcfcf;"></div>
<div style="left:352px;top:726px;width:142px;height:1px;background:#f8f8f8;"></div>
<svg style="left:360.2px;top:688.1px;" width="29" height="25.4" viewBox="0 0 29 25.4"><rect x="1" y="1" width="27" height="23.4" rx="3" fill="#fff" stroke="#1b5499" stroke-width="1.7"/><path d="M3.9 11.2 L11.6 18 L24 7.2" stroke="#0f4288" stroke-width="3" fill="none"/></svg>
<span class="t" style="left:404.50px;top:689px;font-size:15.5px;line-height:17px;color:#44474a;">%s</span>
<div style="left:352px;top:773px;width:142px;height:1px;background:#cfcfcf;"></div>
<div style="left:352px;top:774px;width:142px;height:1px;background:#f8f8f8;"></div>
<svg style="left:360.2px;top:735.9px;" width="29" height="25.4" viewBox="0 0 29 25.4"><rect x="1" y="1" width="27" height="23.4" rx="3" fill="#fff" stroke="#1b5499" stroke-width="1.7"/><path d="M3.9 11.2 L11.6 18 L24 7.2" stroke="#0f4288" stroke-width="3" fill="none"/></svg>
<span class="t" style="left:404.50px;top:737px;font-size:15.5px;line-height:17px;color:#44474a;">%s</span>
<div style="left:352px;top:821px;width:142px;height:1px;background:#cfcfcf;"></div>
<svg style="left:360.2px;top:783.8px;" width="29" height="25.4" viewBox="0 0 29 25.4"><rect x="1" y="1" width="27" height="23.4" rx="3" fill="#fff" stroke="#1b5499" stroke-width="1.7"/><path d="M3.9 11.2 L11.6 18 L24 7.2" stroke="#0f4288" stroke-width="3" fill="none"/></svg>
<span class="t" style="left:404.50px;top:785px;font-size:15.5px;line-height:17px;color:#44474a;">%s</span>
<div style="left:494px;top:486.6px;width:47.8px;height:334.6px;background:#002b5c;"></div>
<div style="left:494px;top:486.6px;width:47.8px;height:40px;background:#00458e;"></div>
<div style="left:494px;top:526.2px;width:47.8px;height:1.2px;background:#003670;"></div>
<div style="left:494px;top:527.4px;width:47.8px;height:41.6px;background:#00458e;"></div>
<div style="left:499.8px;top:541.1px;width:35.5px;height:14.1px;background:#ffffff;"></div>
<div style="left:494px;top:780.6px;width:47.8px;height:40.6px;background:#00458e;"></div>
<div style="left:494px;top:780.6px;width:47.8px;height:1.3px;background:#1d5aa4;"></div>
<svg style="left:494px;top:486.6px;" width="47.8" height="40" viewBox="0 0 47.8 40"><path d="M5.8 33.4 L23.8 8.4 L41.8 33.4" stroke="#fff" stroke-width="5.9" fill="none" stroke-linecap="round" stroke-linejoin="round"/></svg>
<svg style="left:494px;top:780.6px;" width="47.8" height="40" viewBox="0 0 47.8 40"><path d="M5.8 7.6 L23.8 32.6 L41.8 7.6" stroke="#fff" stroke-width="5.9" fill="none" stroke-linecap="round" stroke-linejoin="round"/></svg>
<div style="left:348.2px;top:435.3px;width:7px;height:7px;background:#8a8aee;border:2px solid #3434fc;box-sizing:border-box;"></div>
<div style="left:348.2px;top:459.1px;width:7px;height:7px;background:#8a8aee;border:2px solid #3434fc;box-sizing:border-box;"></div>
<div style="left:348.2px;top:483.0px;width:7px;height:7px;background:#8a8aee;border:2px solid #3434fc;box-sizing:border-box;"></div>
<div style="left:442.8px;top:435.3px;width:7px;height:7px;background:#8a8aee;border:2px solid #3434fc;box-sizing:border-box;"></div>
<div style="left:442.8px;top:483.0px;width:7px;height:7px;background:#8a8aee;border:2px solid #3434fc;box-sizing:border-box;"></div>
<div style="left:537.5px;top:435.3px;width:7px;height:7px;background:#8a8aee;border:2px solid #3434fc;box-sizing:border-box;"></div>
<div style="left:537.5px;top:459.1px;width:7px;height:7px;background:#8a8aee;border:2px solid #3434fc;box-sizing:border-box;"></div>
<div style="left:537.5px;top:483.0px;width:7px;height:7px;background:#8a8aee;border:2px solid #3434fc;box-sizing:border-box;"></div>
<div style="left:590.8px;top:421.6px;width:731.5px;height:400px;background:#f0f0f0;border:2.2px solid #000;box-sizing:border-box;"></div>
<div style="left:593px;top:423.8px;width:727.2px;height:40.7px;background:#ffffff;"></div>
<span class="t" style="left:603.00px;top:435px;font-size:15.5px;line-height:17px;color:#000;transform:scaleX(0.9842);">Assign parameters &lt;MultiSelectionElementDirect&gt;</span>
<div style="left:1294px;top:434px;width:24.5px;height:24px;background:#c75050;"></div>
<svg style="left:1301.5px;top:442px;" width="9" height="9" viewBox="0 0 9 9"><path d="M1.2 1.2 L7.8 7.8 M7.8 1.2 L1.2 7.8" stroke="#fff" stroke-width="1.9"/></svg>
<span class="t" style="left:610.50px;top:474px;font-size:14.5px;line-height:16px;color:#000;transform:scaleX(1.0083);">Assign the parameters for the referenced visualization &lt;MultiSelectionElementDirect&gt;.</span>
<div style="left:608.5px;top:515px;width:696px;height:241.5px;background:#ffffff;border:1px solid #828790;box-sizing:border-box;"></div>
<div style="left:609.5px;top:516px;width:695px;height:1px;background:#d8d8d8;"></div>
<div style="left:788px;top:517px;width:1px;height:29px;background:#e2e2e2;"></div>
<div style="left:1000px;top:517px;width:1px;height:29px;background:#e2e2e2;"></div>
<div style="left:1241px;top:517px;width:1px;height:29px;background:#e2e2e2;"></div>
<span class="t" style="left:618.50px;top:525px;font-size:14.5px;line-height:16px;color:#000;transform:scaleX(1.0414);">Parameter</span>
<span class="t" style="left:797.00px;top:525px;font-size:14.5px;line-height:16px;color:#000;transform:scaleX(0.9861);">Type</span>
<span class="t" style="left:1009.00px;top:525px;font-size:14.5px;line-height:16px;color:#000;transform:scaleX(1.0413);">Value</span>
<div style="left:636.5px;top:548px;width:363.5px;height:25px;background:#f0f0f0;"></div>
<div style="left:610px;top:573px;width:390px;height:1px;background:#e4e4e4;"></div>
<div style="left:788px;top:547px;width:1px;height:26px;background:#e0e0e0;"></div>
<div style="left:610px;top:546.5px;width:631px;height:1px;background:#ededed;"></div>
<svg style="left:618px;top:560px;" width="16" height="2" viewBox="0 0 16 2"><path d="M0 1 H16" stroke="#a0a0a0" stroke-width="1" stroke-dasharray="1 1.4"/></svg>
<svg style="left:638px;top:550px;" width="22" height="21" viewBox="0 0 22 21"><path d="M1 1 H10 L1 10 Z" fill="#8c1010"/><path d="M3 1.6 L6 4.6 M6.5 1.6 L4 4.2" stroke="#fff" stroke-width="1"/><path d="M12.5 5.5 L20.5 11 L14.5 19.5 L8.5 13 Z" fill="#2038a0" stroke="#101850" stroke-width=".8"/><path d="M12.5 5.5 L14.8 12.2 L20.5 11 M14.8 12.2 L14.5 19.5" stroke="#c0d0ff" stroke-width="1" fill="none"/><path d="M7 8.5 L12 10 L9.5 14" fill="#1c1c1c"/></svg>
<span class="t" style="left:667.50px;top:553px;font-size:14px;line-height:16px;color:#000;transform:scaleX(0.9741);">stMultiSelection</span>
<span class="t" style="left:794.50px;top:554px;font-size:13.5px;line-height:15px;color:#000;transform:scaleX(0.9211);">STMULTISELECTIONBOXTYPE</span>
<div style="left:1000px;top:544.5px;width:247px;height:32.5px;background:#ffffff;border:3px solid #f2000c;box-sizing:border-box;"></div>
<span class="t" style="left:1007.00px;top:549px;font-size:14px;line-height:16px;color:#000;transform:scaleX(0.9534);">PLC_Main.stMultiSelection</span>
<div style="left:1212px;top:549px;width:28.5px;height:22px;background:#f0f0f0;border:1px solid #9c9c9c;box-sizing:border-box;"></div>
<div style="left:1213px;top:550px;width:26.5px;height:20px;border:1px solid #fdfdfd;box-sizing:border-box;"></div>
<div style="left:1221.5px;top:563.5px;width:2px;height:2px;background:#101010;"></div>
<div style="left:1225.5px;top:563.5px;width:2px;height:2px;background:#101010;"></div>
<div style="left:1229.5px;top:563.5px;width:2px;height:2px;background:#101010;"></div>
<div style="left:1105.5px;top:775px;width:94px;height:27.5px;background:#e1e1e1;border:2px solid #0078d7;box-sizing:border-box;"></div>
<span class="t" style="left:1143.75px;top:780px;font-size:14.5px;line-height:16px;color:#000;transform:scaleX(0.9308);">OK</span>
<div style="left:1210px;top:775px;width:93.5px;height:27.5px;background:#e1e1e1;border:1px solid #adadad;box-sizing:border-box;"></div>
<span class="t" style="left:1236.25px;top:780px;font-size:14.5px;line-height:16px;color:#000;transform:scaleX(0.9416);">Cancel</span>
<div style="left:1316px;top:809px;width:2px;height:2px;background:#b4b4b4;"></div>
<div style="left:1313px;top:812px;width:2px;height:2px;background:#b4b4b4;"></div>
<div style="left:1316px;top:812px;width:2px;height:2px;background:#b4b4b4;"></div>
<div style="left:1310px;top:815px;width:2px;height:2px;background:#b4b4b4;"></div>
<div style="left:1313px;top:815px;width:2px;height:2px;background:#b4b4b4;"></div>
<div style="left:1316px;top:815px;width:2px;height:2px;background:#b4b4b4;"></div>
<svg style="left:1764.6px;top:106.4px;" width="8" height="5" viewBox="0 0 8 5"><path d="M0 0 H7.4 L3.7 4 Z" fill="#000"/></svg>
<svg style="left:1783.6px;top:103.8px;" width="7.2" height="8.4" viewBox="0 0 7.2 8.4"><path d="M1.6 0.6 H5.6 M2.2 0.6 V4.6 M5 0.6 V4.6 M0.6 5 H6.6 M3.6 5 V8" stroke="#000" stroke-width="1.1" fill="none"/><path d="M4 0.6 H5 V4.6 H4Z" fill="#000"/></svg>
<svg style="left:1802.2px;top:104px;" width="8" height="7.2" viewBox="0 0 8 7.2"><path d="M0.8 0.6 L7.2 6.6 M7.2 0.6 L0.8 6.6" stroke="#000" stroke-width="1.9"/></svg>
<div style="left:1400px;top:117.2px;width:418px;height:23px;background:linear-gradient(#fdfdfd,#e9e9e9);"></div>
<svg style="left:1406px;top:121px;" width="14" height="15" viewBox="0 0 14 15"><path d="M1 1 H9.5 L13 4.5 V14.5 H1 Z" fill="#fff" stroke="#202020" stroke-width="1"/><path d="M9.5 1 V4.5 H13" fill="none" stroke="#202020" stroke-width=".8"/><path d="M3 5 H11 M3 7.5 H11 M3 10 H11 M3 12.5 H11 M4.5 4 V13.5 M7 4 V13.5 M9.5 4 V13.5" stroke="#808080" stroke-width=".7" stroke-dasharray="1 .6"/><rect x="6" y="6.6" width="2.4" height="2.2" fill="#20e040"/></svg>
<div style="left:1427px;top:123px;width:1px;height:13px;background:#b8b8b8;"></div>
<svg style="left:1434px;top:121px;" width="14" height="15" viewBox="0 0 14 15"><path d="M1 1 H9.5 L13 4.5 V14.5 H1 Z" fill="#fff" stroke="#202020" stroke-width="1"/><path d="M9.5 1 V4.5 H13" fill="none" stroke="#202020" stroke-width=".8"/><path d="M3 5 H11 M3 7.5 H11 M3 10 H11 M3 12.5 H11 M4.5 4 V13.5 M7 4 V13.5 M9.5 4 V13.5" stroke="#808080" stroke-width=".7" stroke-dasharray="1 .6"/><rect x="3.4" y="4" width="7.4" height="9.6" fill="#30e050" opacity=".75"/></svg>
<div style="left:1454.5px;top:123px;width:1px;height:13px;background:#b8b8b8;"></div>
<svg style="left:1460px;top:120px;" width="17" height="17" viewBox="0 0 17 17"><rect x="2.5" y="1" width="13" height="11" fill="#f8f8f8" stroke="#101080" stroke-width="1.6"/><path d="M2 15.5 L10 6" stroke="#101010" stroke-width="1.6"/><path d="M6.5 3.5 L11 3 L14 6.5 L12.5 8.5 L9.5 5.5 Z" fill="#e0a800" stroke="#302000" stroke-width=".8"/></svg>
<div style="left:1400px;top:140px;width:418px;height:288px;background:#d3d3d3;"></div>
<div style="left:1400.1px;top:142.0px;width:52.1px;height:18px;background:linear-gradient(#969696,#808080 50%,#646464);border:1px solid #565656;box-sizing:border-box;border-radius:5.5px;box-shadow:0 1px 0.5px #4c4c4c;"></div>
<span class="t" style="left:1412.28px;top:145px;font-size:12px;line-height:14px;color:#ffffff;transform:scaleX(0.9450);text-shadow:0 0 1px rgba(60,60,60,.6);">Basic</span>
<div style="left:1454.6px;top:142.0px;width:114.9px;height:18px;background:linear-gradient(#969696,#808080 50%,#646464);border:1px solid #565656;box-sizing:border-box;border-radius:5.5px;box-shadow:0 1px 0.5px #4c4c4c;"></div>
<span class="t" style="left:1466.36px;top:145px;font-size:12px;line-height:14px;color:#ffffff;transform:scaleX(0.9450);text-shadow:0 0 1px rgba(60,60,60,.6);">Common Controls</span>
<div style="left:1572.3px;top:142.0px;width:101.2px;height:18px;background:linear-gradient(#969696,#808080 50%,#646464);border:1px solid #565656;box-sizing:border-box;border-radius:5.5px;box-shadow:0 1px 0.5px #4c4c4c;"></div>
<span class="t" style="left:1584.14px;top:145px;font-size:12px;line-height:14px;color:#ffffff;transform:scaleX(0.9450);text-shadow:0 0 1px rgba(60,60,60,.6);">Alarm Manager</span>
<div style="left:1676.3px;top:142.0px;width:140.3px;height:18px;background:linear-gradient(#969696,#808080 50%,#646464);border:1px solid #565656;box-sizing:border-box;border-radius:5.5px;box-shadow:0 1px 0.5px #4c4c4c;"></div>
<span class="t" style="left:1689.09px;top:145px;font-size:12px;line-height:14px;color:#ffffff;transform:scaleX(0.9450);text-shadow:0 0 1px rgba(60,60,60,.6);">Measurement Controls</span>
<div style="left:1400.1px;top:162.2px;width:161.5px;height:18px;background:linear-gradient(#969696,#808080 50%,#646464);border:1px solid #565656;box-sizing:border-box;border-radius:5.5px;box-shadow:0 1px 0.5px #4c4c4c;"></div>
<span class="t" style="left:1417.51px;top:165px;font-size:12px;line-height:14px;color:#ffffff;transform:scaleX(0.9450);text-shadow:0 0 1px rgba(60,60,60,.6);">Lamps/Switches/Bitmaps</span>
<div style="left:1564.2px;top:162.2px;width:116.1px;height:18px;background:linear-gradient(#969696,#808080 50%,#646464);border:1px solid #565656;box-sizing:border-box;border-radius:5.5px;box-shadow:0 1px 0.5px #4c4c4c;"></div>
<span class="t" style="left:1580.96px;top:165px;font-size:12px;line-height:14px;color:#ffffff;transform:scaleX(0.9450);text-shadow:0 0 1px rgba(60,60,60,.6);">Special Controls</span>
<div style="left:1682.8px;top:162.2px;width:133.8px;height:18px;background:linear-gradient(#969696,#808080 50%,#646464);border:1px solid #565656;box-sizing:border-box;border-radius:5.5px;box-shadow:0 1px 0.5px #4c4c4c;"></div>
<span class="t" style="left:1701.07px;top:165px;font-size:12px;line-height:14px;color:#ffffff;transform:scaleX(0.9450);text-shadow:0 0 1px rgba(60,60,60,.6);">Date/Time Controls</span>
<div style="left:1400.1px;top:182.4px;width:119.4px;height:18px;background:linear-gradient(#969696,#808080 50%,#646464);border:1px solid #565656;box-sizing:border-box;border-radius:5.5px;box-shadow:0 1px 0.5px #4c4c4c;"></div>
<span class="t" style="left:1416.62px;top:185px;font-size:12px;line-height:14px;color:#ffffff;transform:scaleX(0.9450);text-shadow:0 0 1px rgba(60,60,60,.6);">ImagePool_OEM</span>
<div style="left:1521.8px;top:182.4px;width:124.5px;height:18px;background:linear-gradient(#969696,#808080 50%,#646464);border:1px solid #565656;box-sizing:border-box;border-radius:5.5px;box-shadow:0 1px 0.5px #4c4c4c;"></div>
<span class="t" style="left:1538.03px;top:185px;font-size:12px;line-height:14px;color:#ffffff;transform:scaleX(0.9450);text-shadow:0 0 1px rgba(60,60,60,.6);">ImagePoolDialogs</span>
<div style="left:1648.6px;top:182.4px;width:74.7px;height:18px;background:linear-gradient(#969696,#808080 50%,#646464);border:1px solid #565656;box-sizing:border-box;border-radius:5.5px;box-shadow:0 1px 0.5px #4c4c4c;"></div>
<span class="t" style="left:1664.84px;top:185px;font-size:12px;line-height:14px;color:#ffffff;transform:scaleX(0.9450);text-shadow:0 0 1px rgba(60,60,60,.6);">IP_VUM</span>
<div style="left:1725.6px;top:182.4px;width:91.0px;height:18px;background:linear-gradient(#969696,#808080 50%,#646464);border:1px solid #565656;box-sizing:border-box;border-radius:5.5px;box-shadow:0 1px 0.5px #4c4c4c;"></div>
<span class="t" style="left:1743.99px;top:185px;font-size:12px;line-height:14px;color:#ffffff;transform:scaleX(0.9450);text-shadow:0 0 1px rgba(60,60,60,.6);">ImagePool</span>
<div style="left:1400.1px;top:202.6px;width:122.6px;height:18px;background:linear-gradient(#969696,#808080 50%,#646464);border:1px solid #565656;box-sizing:border-box;border-radius:5.5px;box-shadow:0 1px 0.5px #4c4c4c;"></div>
<span class="t" style="left:1407.18px;top:206px;font-size:12px;line-height:14px;color:#ffffff;transform:scaleX(0.9450);text-shadow:0 0 1px rgba(60,60,60,.6);">SaveanimationRound</span>
<div style="left:1525.3px;top:202.6px;width:125.2px;height:18px;background:linear-gradient(#969696,#808080 50%,#646464);border:1px solid #565656;box-sizing:border-box;border-radius:5.5px;box-shadow:0 1px 0.5px #4c4c4c;"></div>
<span class="t" style="left:1532.11px;top:206px;font-size:12px;line-height:14px;color:#ffffff;transform:scaleX(0.9450);text-shadow:0 0 1px rgba(60,60,60,.6);">SaveanimationSquare</span>
<div style="left:1653.3px;top:202.6px;width:60.0px;height:18px;background:linear-gradient(#969696,#808080 50%,#646464);border:1px solid #565656;box-sizing:border-box;border-radius:5.5px;box-shadow:0 1px 0.5px #4c4c4c;"></div>
<span class="t" style="left:1659.98px;top:206px;font-size:12px;line-height:14px;color:#ffffff;transform:scaleX(0.9450);text-shadow:0 0 1px rgba(60,60,60,.6);">Miniature</span>
<div style="left:1715.6px;top:202.6px;width:47.3px;height:18px;background:linear-gradient(#969696,#808080 50%,#646464);border:1px solid #565656;box-sizing:border-box;border-radius:5.5px;box-shadow:0 1px 0.5px #4c4c4c;"></div>
<span class="t" style="left:1722.54px;top:206px;font-size:12px;line-height:14px;color:#ffffff;transform:scaleX(0.9450);text-shadow:0 0 1px rgba(60,60,60,.6);">Round</span>
<div style="left:1765.4px;top:202.6px;width:51.2px;height:18px;background:linear-gradient(#969696,#808080 50%,#646464);border:1px solid #565656;box-sizing:border-box;border-radius:5.5px;box-shadow:0 1px 0.5px #4c4c4c;"></div>
<span class="t" style="left:1772.72px;top:206px;font-size:12px;line-height:14px;color:#ffffff;transform:scaleX(0.9450);text-shadow:0 0 1px rgba(60,60,60,.6);">Square</span>
<div style="left:1400.1px;top:222.8px;width:94.3px;height:18px;background:linear-gradient(#969696,#808080 50%,#646464);border:1px solid #565656;box-sizing:border-box;border-radius:5.5px;box-shadow:0 1px 0.5px #4c4c4c;"></div>
<span class="t" style="left:1416.99px;top:226px;font-size:12px;line-height:14px;color:#ffffff;transform:scaleX(0.9450);text-shadow:0 0 1px rgba(60,60,60,.6);">Background</span>
<div style="left:1496.9px;top:222.8px;width:83.8px;height:18px;background:linear-gradient(#969696,#808080 50%,#646464);border:1px solid #565656;box-sizing:border-box;border-radius:5.5px;box-shadow:0 1px 0.5px #4c4c4c;"></div>
<span class="t" style="left:1513.59px;top:226px;font-size:12px;line-height:14px;color:#ffffff;transform:scaleX(0.9450);text-shadow:0 0 1px rgba(60,60,60,.6);">Checkbox</span>
<div style="left:1583.2px;top:222.8px;width:63.1px;height:18px;background:linear-gradient(#969696,#808080 50%,#646464);border:1px solid #565656;box-sizing:border-box;border-radius:5.5px;box-shadow:0 1px 0.5px #4c4c4c;"></div>
<span class="t" style="left:1600.25px;top:226px;font-size:12px;line-height:14px;color:#ffffff;transform:scaleX(0.9450);text-shadow:0 0 1px rgba(60,60,60,.6);">Slider</span>
<div style="left:1648.6px;top:222.8px;width:168.0px;height:18px;background:linear-gradient(#969696,#808080 50%,#646464);border:1px solid #565656;box-sizing:border-box;border-radius:5.5px;box-shadow:0 1px 0.5px #4c4c4c;"></div>
<span class="t" style="left:1667.68px;top:226px;font-size:12px;line-height:14px;color:#ffffff;transform:scaleX(0.9450);text-shadow:0 0 1px rgba(60,60,60,.6);">SquareNegativeDarkGrey</span>
<div style="left:1400.1px;top:242.9px;width:120.1px;height:18px;background:linear-gradient(#969696,#808080 50%,#646464);border:1px solid #565656;box-sizing:border-box;border-radius:5.5px;box-shadow:0 1px 0.5px #4c4c4c;"></div>
<span class="t" style="left:1407.20px;top:246px;font-size:12px;line-height:14px;color:#ffffff;transform:scaleX(0.9450);text-shadow:0 0 1px rgba(60,60,60,.6);">SquareNegativeGrey</span>
<div style="left:1522.7px;top:242.9px;width:57.5px;height:18px;background:linear-gradient(#969696,#808080 50%,#646464);border:1px solid #565656;box-sizing:border-box;border-radius:5.5px;box-shadow:0 1px 0.5px #4c4c4c;"></div>
<span class="t" style="left:1529.71px;top:246px;font-size:12px;line-height:14px;color:#ffffff;transform:scaleX(0.9450);text-shadow:0 0 1px rgba(60,60,60,.6);">Symbols</span>
<div style="left:1582.5px;top:242.9px;width:88.7px;height:18px;background:linear-gradient(#969696,#808080 50%,#646464);border:1px solid #565656;box-sizing:border-box;border-radius:5.5px;box-shadow:0 1px 0.5px #4c4c4c;"></div>
<span class="t" style="left:1589.35px;top:246px;font-size:12px;line-height:14px;color:#ffffff;transform:scaleX(0.9450);text-shadow:0 0 1px rgba(60,60,60,.6);">Current project</span>
<div style="left:1673.5px;top:242.9px;width:65.4px;height:18px;background:linear-gradient(#969696,#808080 50%,#646464);border:1px solid #565656;box-sizing:border-box;border-radius:5.5px;box-shadow:0 1px 0.5px #4c4c4c;"></div>
<span class="t" style="left:1680.47px;top:246px;font-size:12px;line-height:14px;color:#ffffff;transform:scaleX(0.9450);text-shadow:0 0 1px rgba(60,60,60,.6);">JCmpVisu</span>
<div style="left:1741.5px;top:242.9px;width:75.1px;height:18px;background:linear-gradient(#969696,#808080 50%,#646464);border:1px solid #565656;box-sizing:border-box;border-radius:5.5px;box-shadow:0 1px 0.5px #4c4c4c;"></div>
<span class="t" style="left:1749.21px;top:246px;font-size:12px;line-height:14px;color:#ffffff;transform:scaleX(0.9450);text-shadow:0 0 1px rgba(60,60,60,.6);">VisuDialogs</span>
<div style="left:1400.1px;top:263.1px;width:131.0px;height:18px;background:linear-gradient(#969696,#808080 50%,#646464);border:1px solid #565656;box-sizing:border-box;border-radius:5.5px;box-shadow:0 1px 0.5px #4c4c4c;"></div>
<span class="t" style="left:1409.60px;top:266px;font-size:12px;line-height:14px;color:#ffffff;transform:scaleX(0.9450);text-shadow:0 0 1px rgba(60,60,60,.6);">VisuUserManagement</span>
<div style="left:1533.7px;top:263.1px;width:83.7px;height:18px;background:linear-gradient(#969696,#808080 50%,#646464);border:1px solid #565656;box-sizing:border-box;border-radius:5.5px;box-shadow:0 1px 0.5px #4c4c4c;"></div>
<span class="t" style="left:1542.88px;top:266px;font-size:12px;line-height:14px;color:#ffffff;transform:scaleX(0.9450);text-shadow:0 0 1px rgba(60,60,60,.6);">JCmpPgVisu</span>
<div style="left:1620px;top:263.1px;width:98px;height:18px;background:linear-gradient(#5ccc5c,#3cae3c 50%,#2c962c);border:1px solid #2a7a2a;box-sizing:border-box;border-radius:5.5px;box-shadow:0 1px 0.5px #4c4c4c;"></div>
<span class="t" style="left:1629.40px;top:266px;font-size:12px;line-height:14px;color:#ffffff;transform:scaleX(0.9450);text-shadow:0 0 1px rgba(60,60,60,.6);">JCmpVisuBasic</span>
<div style="left:1720.5px;top:263.1px;width:96.1px;height:18px;background:linear-gradient(#969696,#808080 50%,#646464);border:1px solid #565656;box-sizing:border-box;border-radius:5.5px;box-shadow:0 1px 0.5px #4c4c4c;"></div>
<span class="t" style="left:1730.43px;top:266px;font-size:12px;line-height:14px;color:#ffffff;transform:scaleX(0.9450);text-shadow:0 0 1px rgba(60,60,60,.6);">JCmpVisuTime</span>
<div style="left:1400.1px;top:283.3px;width:416.5px;height:18px;background:linear-gradient(#969696,#808080 50%,#646464);border:1px solid #565656;box-sizing:border-box;border-radius:5.5px;box-shadow:0 1px 0.5px #4c4c4c;"></div>
<span class="t" style="left:1587.87px;top:286px;font-size:12px;line-height:14px;color:#ffffff;transform:scaleX(0.9450);text-shadow:0 0 1px rgba(60,60,60,.6);">Favorite</span>
<div style="left:1400px;top:428px;width:418px;height:1.2px;background:#9a9a9a;"></div>
<div style="left:1400px;top:429.2px;width:418px;height:2px;background:#ececec;"></div>
<svg style="left:1598.5px;top:427.5px;" width="7" height="4" viewBox="0 0 7 4"><path d="M0 4 L3.5 0 L7 4 Z" fill="#909090"/></svg>
<svg style="left:1613px;top:427.5px;" width="7" height="4" viewBox="0 0 7 4"><path d="M0 0 L3.5 4 L7 0 Z" fill="#909090"/></svg>
<div style="left:1400px;top:431px;width:414px;height:597px;background:#ffffff;border:1px solid #8a919c;box-sizing:border-box;"></div>
<div style="left:1796.5px;top:432px;width:16.5px;height:595px;background:#f0f0f0;"></div>
<div style="left:1797.5px;top:590px;width:14.5px;height:165px;background:#cdcdcd;"></div>
<svg style="left:1800.5px;top:438px;" width="9" height="7" viewBox="0 0 9 7"><path d="M1 5.5 L4.5 1.5 L8 5.5" stroke="#404040" stroke-width="1.6" fill="none"/></svg>
<svg style="left:1800.5px;top:1016px;" width="9" height="7" viewBox="0 0 9 7"><path d="M1 1.5 L4.5 5.5 L8 1.5" stroke="#404040" stroke-width="1.6" fill="none"/></svg>
<svg style="left:1442.5px;top:435.0px;" width="43" height="43" viewBox="0 0 43 43"><circle cx="22.3" cy="22.5" r="20.5" fill="#d8dce6"/><circle cx="21" cy="21" r="20.3" fill="#004590"/><path d="M29.5 9.5 L10.5 21 L29.5 32" stroke="#fff" stroke-width="5.6" fill="none" stroke-linecap="round" stroke-linejoin="round"/></svg>
<svg style="left:1563.7px;top:435.0px;" width="43" height="43" viewBox="0 0 43 43"><circle cx="22.3" cy="22.5" r="20.5" fill="#d8dce6"/><circle cx="21" cy="21" r="20.3" fill="#004590"/><path d="M21 7.5 Q28.3 7.8 28.7 18 Q29.2 26 32.7 30 H9.3 Q12.8 26 13.3 18 Q13.7 7.8 21 7.5 Z" fill="#fff"/><path d="M18.4 31.6 H23.6 Q21 35.6 18.4 31.6 Z" fill="#fff"/><path d="M11.1 8.6 Q3.5 15 7.0 23.5 M7.9 6.2 Q-1.5 14 2.9 24.5 M30.9 8.6 Q38.5 15 35.0 23.5 M34.1 6.2 Q43.5 14 39.1 24.5" stroke="#fff" stroke-width="1.7" fill="none" stroke-linecap="round"/></svg>
<svg style="left:1684.9px;top:435.0px;" width="43" height="43" viewBox="0 0 43 43"><circle cx="22.3" cy="22.5" r="20.5" fill="#d8dce6"/><circle cx="21" cy="21" r="20.3" fill="#004590"/><path d="M21 7.5 Q26.8 7.8 27.2 18 Q27.6 26 30.4 30 H11.6 Q14.4 26 14.8 18 Q15.2 7.8 21 7.5 Z" fill="#fff"/><path d="M18.4 31.6 H23.6 Q21 35.6 18.4 31.6 Z" fill="#fff"/><path d="M13.0 8.6 Q7.0 15 9.8 23.5 M10.5 6.2 Q3.0 14 6.5 24.5 M29.0 8.6 Q35.0 15 32.2 23.5 M31.5 6.2 Q39.0 14 35.5 24.5" stroke="#fff" stroke-width="1.7" fill="none" stroke-linecap="round"/><defs><clipPath id="ckc"><circle cx="21" cy="21" r="20.6"/></clipPath></defs><g clip-path="url(#ckc)"><path d="M10.3 31.4 L19.7 39.6 L42 20" stroke="#004590" stroke-width="8.6" fill="none" stroke-linecap="round" stroke-linejoin="round"/><path d="M10.3 31.4 L19.7 39.6 L42 20" stroke="#fff" stroke-width="5" fill="none" stroke-linecap="round" stroke-linejoin="round"/></g></svg>
<svg style="left:1442.5px;top:520.5px;" width="43" height="43" viewBox="0 0 43 43"><circle cx="22.3" cy="22.5" r="20.5" fill="#d8dce6"/><circle cx="21" cy="21" r="20.3" fill="#004590"/><path d="M12 12 L30 30 M30 12 L12 30" stroke="#fff" stroke-width="5.6" fill="none" stroke-linecap="round"/></svg>
<span class="t" style="left:1425.95px;top:482px;font-size:10.5px;line-height:12px;color:#101010;letter-spacing:0.121px;">ButtonArrowLeft</span>
<span class="t" style="left:1557.20px;top:482px;font-size:10.5px;line-height:12px;color:#101010;transform:scaleX(0.9969);">ButtonAlarm</span>
<span class="t" style="left:1650.85px;top:482px;font-size:10.5px;line-height:12px;color:#101010;transform:scaleX(0.9619);">ButtonAcknowledgeAla...</span>
<span class="t" style="left:1435.70px;top:567px;font-size:10.5px;line-height:12px;color:#101010;letter-spacing:0.195px;">ButtonAbort</span>
<span class="t" style="left:1532.70px;top:567px;font-size:10.5px;line-height:12px;color:#101010;transform:scaleX(0.9768);">SelectionElementDirect</span>
<span class="t" style="left:1667.55px;top:567px;font-size:10.5px;line-height:12px;color:#101010;transform:scaleX(0.9655);">SelectionElement</span>
<div style="left:1562px;top:538px;width:34px;height:7.5px;background:#ffffff;border:1px solid #a0a0a0;box-sizing:border-box;"></div>
<div style="left:1590px;top:545px;width:6px;height:2px;background:#004590;"></div>
<div style="left:1563px;top:540px;width:1.5px;height:2px;background:#004590;"></div>
<div style="left:1683px;top:538px;width:38px;height:7.5px;background:#ffffff;border:1px solid #909090;box-sizing:border-box;"></div>
<div style="left:1698px;top:540.5px;width:6px;height:2px;background:#004590;"></div>
<div style="left:1445px;top:615.5px;width:36px;height:23px;background:#ececec;border:1.5px solid #004590;box-sizing:border-box;"></div>
<div style="left:1445px;top:636px;width:36px;height:2.5px;background:#004590;"></div>
<div style="left:1448px;top:619.0px;width:1.2px;height:1.2px;background:#6080b0;"></div>
<div style="left:1448px;top:622.2px;width:1.2px;height:1.2px;background:#6080b0;"></div>
<div style="left:1448px;top:625.4px;width:1.2px;height:1.2px;background:#6080b0;"></div>
<div style="left:1522px;top:608px;width:128px;height:76px;border:3px solid #f6000c;box-sizing:border-box;"></div>
<div style="left:1562px;top:620.2px;width:46.3px;height:13px;background:#a4cdff;"></div>
<div style="left:1562px;top:620.2px;width:38.5px;height:13px;background:#8cc0fc;border:1px solid #6aaef8;box-sizing:border-box;"></div>
<div style="left:1591px;top:631.4px;width:9.5px;height:1.8px;background:#1468c8;"></div>
<div style="left:1563.5px;top:625px;width:5.5px;height:1.6px;background:#3f78c8;"></div>
<div style="left:1596px;top:624px;width:1.5px;height:1.5px;background:#5a94de;"></div>
<div style="left:1526.6px;top:652.7px;width:117.4px;height:25px;background:#3399ff;"></div>
<span class="t" style="left:1527.20px;top:653px;font-size:10.5px;line-height:12px;color:#fff;transform:scaleX(0.9821);">MultiSelectionElementDir</span>
<span class="t" style="left:1579.95px;top:666px;font-size:10.5px;line-height:12px;color:#fff;transform:scaleX(0.8639);">ect</span>
<div style="left:1683px;top:623.5px;width:38px;height:7.5px;background:#ffffff;border:1px solid #909090;box-sizing:border-box;"></div>
<div style="left:1685px;top:625.8px;width:6px;height:2.4px;background:#004590;"></div>
<span class="t" style="left:1412.95px;top:653px;font-size:10.5px;line-height:12px;color:#101010;transform:scaleX(0.9760);">SelectionBoxTextArray</span>
<span class="t" style="left:1656.15px;top:653px;font-size:10.5px;line-height:12px;color:#101010;transform:scaleX(0.9790);">MultiSelectionElement</span>
<div style="left:1445px;top:695.0px;width:36px;height:23px;background:#ececec;border:1.5px solid #004590;box-sizing:border-box;"></div>
<div style="left:1445px;top:715.5px;width:36px;height:2.5px;background:#004590;"></div>
<div style="left:1448px;top:698.5px;width:1.2px;height:1.2px;background:#6080b0;"></div>
<div style="left:1448px;top:701.7px;width:1.2px;height:1.2px;background:#6080b0;"></div>
<div style="left:1448px;top:704.9px;width:1.2px;height:1.2px;background:#6080b0;"></div>
<span class="t" style="left:1406.75px;top:727px;font-size:10.5px;line-height:12px;color:#101010;transform:scaleX(0.9896);">MultiSelectionBoxTextArr</span>
<span class="t" style="left:1459.70px;top:739px;font-size:10.5px;line-height:12px;color:#101010;transform:scaleX(0.8657);">ay</span>
<div style="left:1582.3px;top:687.5px;width:7px;height:49.5px;background:#002b5c;"></div>
<div style="left:1582.3px;top:687.5px;width:7px;height:5px;background:#004590;"></div>
<div style="left:1582.3px;top:732px;width:7px;height:5px;background:#004590;"></div>
<div style="left:1584.3px;top:694.5px;width:3px;height:1.5px;background:#ffffff;"></div>
<svg style="left:1582.3px;top:687.5px;" width="7" height="5" viewBox="0 0 7 5"><path d="M1.05 4 L3.5 1.2 L5.95 4" stroke="#fff" stroke-width=".9" fill="none"/></svg>
<svg style="left:1582.3px;top:732px;" width="7" height="5" viewBox="0 0 7 5"><path d="M1.05 1 L3.5 3.8 L5.95 1" stroke="#fff" stroke-width=".9" fill="none"/></svg>
<div style="left:1704.0px;top:687.5px;width:6px;height:49.5px;background:#002b5c;"></div>
<div style="left:1704.0px;top:687.5px;width:6px;height:5px;background:#004590;"></div>
<div style="left:1704.0px;top:732px;width:6px;height:5px;background:#004590;"></div>
<div style="left:1705.5px;top:694.5px;width:3px;height:1.5px;background:#ffffff;"></div>
<svg style="left:1704.0px;top:687.5px;" width="6" height="5" viewBox="0 0 6 5"><path d="M0.8999999999999999 4 L3.0 1.2 L5.1 4" stroke="#fff" stroke-width=".9" fill="none"/></svg>
<svg style="left:1704.0px;top:732px;" width="6" height="5" viewBox="0 0 6 5"><path d="M0.8999999999999999 1 L3.0 3.8 L5.1 1" stroke="#fff" stroke-width=".9" fill="none"/></svg>
<span class="t" style="left:1536.05px;top:739px;font-size:10.5px;line-height:12px;color:#101010;transform:scaleX(0.9780);">ScrollbarMenu_360px</span>
<span class="t" style="left:1657.25px;top:739px;font-size:10.5px;line-height:12px;color:#101010;transform:scaleX(0.9741);">ScrollbarMenu_350px</span>
<div style="left:1462.0px;top:773px;width:4px;height:49px;background:#002b5c;"></div>
<div style="left:1462.0px;top:773px;width:4px;height:5px;background:#004590;"></div>
<div style="left:1462.0px;top:817px;width:4px;height:5px;background:#004590;"></div>
<div style="left:1462.5px;top:780px;width:3px;height:1.5px;background:#ffffff;"></div>
<svg style="left:1462.0px;top:773px;" width="4" height="5" viewBox="0 0 4 5"><path d="M0.6 4 L2.0 1.2 L3.4 4" stroke="#fff" stroke-width=".9" fill="none"/></svg>
<svg style="left:1462.0px;top:817px;" width="4" height="5" viewBox="0 0 4 5"><path d="M0.6 1 L2.0 3.8 L3.4 1" stroke="#fff" stroke-width=".9" fill="none"/></svg>
<span class="t" style="left:1431.45px;top:824px;font-size:10.5px;line-height:12px;color:#101010;transform:scaleX(0.9764);">ScrollbarMenu</span>
<svg style="left:1563px;top:776px;" width="45" height="44" viewBox="0 0 45 44"><rect x="1.5" y="1.5" width="43" height="42" fill="#c4ccd8"/><rect x="0" y="0" width="43" height="42" fill="#004590"/><path d="M5.5 33 L21.5 9.5 L37.5 33" stroke="#fff" stroke-width="5.4" fill="none" stroke-linecap="round"/></svg>
<span class="t" style="left:1530.90px;top:824px;font-size:10.5px;line-height:12px;color:#101010;transform:scaleX(0.9885);">ButtonUpScrollbarMenu</span>
<svg style="left:1688px;top:774px;" width="38" height="37" viewBox="0 0 38 37"><rect x="1.2" y="1.2" width="36.5" height="35.5" fill="#c4ccd8"/><rect x="0" y="0" width="36.5" height="35.5" fill="#004590"/><path d="M4.5 6.5 L18 29 L31.5 6.5" stroke="#fff" stroke-width="4.8" fill="none" stroke-linecap="round"/></svg>
<span class="t" style="left:1650.50px;top:812px;font-size:10.5px;line-height:12px;color:#101010;">ButtonDownScrollbarMe</span>
<span class="t" style="left:1702.00px;top:824px;font-size:10.5px;line-height:12px;color:#101010;transform:scaleX(0.8562);">nu</span>
<div style="left:1455px;top:877px;width:7px;height:2.2px;background:#101010;"></div>
<div style="left:1577px;top:877px;width:7px;height:2.2px;background:#101010;"></div>
<div style="left:1698px;top:877px;width:7px;height:2.2px;background:#101010;"></div>
<span class="t" style="left:1406.40px;top:897px;font-size:10.5px;line-height:12px;color:#101010;letter-spacing:0.011px;">OutputstFloatValueTwoC</span>
<span class="t" style="left:1450.80px;top:909px;font-size:10.5px;line-height:12px;color:#101010;transform:scaleX(0.9392);">omma</span>
<span class="t" style="left:1527.90px;top:897px;font-size:10.5px;line-height:12px;color:#101010;">OutputstFloatValueThree</span>
<span class="t" style="left:1568.95px;top:909px;font-size:10.5px;line-height:12px;color:#101010;transform:scaleX(0.9277);">Comma</span>
<span class="t" style="left:1649.25px;top:897px;font-size:10.5px;line-height:12px;color:#101010;transform:scaleX(0.9911);">OutputstFloatValueOneC</span>
<span class="t" style="left:1693.30px;top:909px;font-size:10.5px;line-height:12px;color:#101010;transform:scaleX(0.9392);">omma</span>
<div style="left:1455px;top:962px;width:7px;height:2.2px;background:#101010;"></div>
<div style="left:1577px;top:962px;width:7px;height:2.2px;background:#101010;"></div>
<div style="left:1698px;top:968px;width:7px;height:2.2px;background:#101010;"></div>
<span class="t" style="left:1409.75px;top:983px;font-size:10.5px;line-height:12px;color:#101010;transform:scaleX(0.9443);">OutputstFloatValueNoCo</span>
<span class="t" style="left:1453.85px;top:995px;font-size:10.5px;line-height:12px;color:#101010;transform:scaleX(0.9128);">mma</span>
<span class="t" style="left:1530.35px;top:983px;font-size:10.5px;line-height:12px;color:#101010;transform:scaleX(0.9502);">OutputstDoubleValueBas</span>
<span class="t" style="left:1583.70px;top:995px;font-size:10.5px;line-height:12px;color:#101010;transform:scaleX(0.7877);">e</span>
<span class="t" style="left:1657.05px;top:995px;font-size:10.5px;line-height:12px;color:#101010;letter-spacing:0.045px;">OutputstDoubleValue</span>
<div style="left:1399.4px;top:1028.5px;width:419px;height:34px;background:#f0f0f0;"></div>
<div style="left:1411px;top:1045px;width:80px;height:2.5px;background:#e4e4e4;border:1px solid #d0d0d0;box-sizing:border-box;"></div>
<svg style="left:1423px;top:1037px;" width="10" height="19" viewBox="0 0 10 19"><path d="M0.5 0.5 H9.5 V13.5 L5 18 L0.5 13.5 Z" fill="#1a74dc" stroke="#1062c0" stroke-width=".6"/></svg>
<div style="left:1499px;top:1037px;width:17.5px;height:17.5px;background:#a8a8a8;"></div>
<svg style="left:1502px;top:1040px;" width="12" height="12" viewBox="0 0 12 12"><circle cx="4.8" cy="4.8" r="3.5" fill="none" stroke="#fff" stroke-width="1.3"/><path d="M7.4 7.4 L11 11" stroke="#fff" stroke-width="1.7"/></svg>
<div style="left:1516.5px;top:1036px;width:232.5px;height:18.5px;background:#ffffff;border:1px solid #7a7a7a;box-sizing:border-box;"></div>
<span class="t" style="left:1775.00px;top:1038px;font-size:11px;line-height:12px;color:#000;transform:scaleX(0.9141);">72 items</span>
<div style="left:1399.4px;top:1063.4px;width:419px;height:20px;background:#fafafa;"></div>
<div style="left:1399.4px;top:1062.6px;width:419px;height:1px;background:#b4b4b4;"></div>
<div style="left:1470.5px;top:1062.6px;width:117px;height:19.8px;background:#ffffff;border:1px solid #a8a8a8;box-sizing:border-box;border-top:none;border-radius:0 0 3px 3px;"></div>
<svg style="left:1402.5px;top:1065px;" width="15" height="15" viewBox="0 0 15 15"><path d="M1 5 H9 V14 H1 Z" fill="#d8d8d8" stroke="#303030" stroke-width="1"/><path d="M6 9 L10.5 3.5 L14.5 6 V14 H6 Z" fill="#f0f0f0" stroke="#303030" stroke-width="1"/><path d="M10 1 H14.5 V5" stroke="#2030a0" stroke-width="1.6" fill="none"/><rect x="8" y="9" width="2.4" height="2.6" fill="#505050"/></svg>
<span class="t" style="left:1420.30px;top:1067px;font-size:11px;line-height:12px;color:#6c6c6c;transform:scaleX(0.8976);">Properties</span>
<svg style="left:1473.5px;top:1065px;" width="14.5" height="14.5" viewBox="0 0 16 16"><path d="M2.7 1.5 H10.4 L13.5 4.6 V14.6 H2.7 Z" fill="#fff" stroke="#303030" stroke-width="0.9"/><path d="M10.4 1.5 V4.6 H13.5" fill="#e4e4e4" stroke="#303030" stroke-width="0.8"/><path d="M3.4 15.5 H14.4 V5.4" stroke="#505050" stroke-width="1" fill="none"/><g transform="translate(-0.8,0)"><path d="M11 6.5 H13 M11 8.5 H13 M11 10.5 H13 M6 13 H13" stroke="#b8b8b8" stroke-width=".8"/><rect x="5" y="2.6" width="5.6" height="5.2" fill="#e01818" stroke="#700000" stroke-width="0.6"/><rect x="6.6" y="3.8" width="2.6" height="2.4" fill="#ffe820"/><rect x="6.6" y="7.8" width="4" height="4.8" fill="#e8207c" stroke="#600030" stroke-width="0.6"/><rect x="6.6" y="11" width="4" height="1.6" fill="#2020c0"/><rect x="0.6" y="7" width="5.6" height="5" rx="0.8" fill="#38c820" stroke="#186000" stroke-width="0.7"/><rect x="2" y="8.2" width="2.6" height="2.6" fill="#f4f440"/></g></svg>
<span class="t" style="left:1491.30px;top:1067px;font-size:11px;line-height:12px;color:#000;transform:scaleX(0.8941);">Visualization Toolbox</span>
<div style="left:1px;top:1062px;width:292.6px;height:21px;background:#f0f0f0;"></div>
<div style="left:1px;top:1060.6px;width:292.6px;height:1.4px;background:#a4a4a4;"></div>
<div style="left:1.2px;top:1062px;width:60.4px;height:20.6px;background:#ffffff;border:1px solid #a8a8a8;box-sizing:border-box;border-top:none;border-left:none;border-radius:0 0 4px 4px;"></div>
<svg style="left:3.4px;top:1066px;" width="15.4" height="13.6" viewBox="0 0 15.4 13.6"><defs><linearGradient id="dg" x1="0" y1="0" x2="1" y2="1"><stop offset="0" stop-color="#f4f4f4"/><stop offset="1" stop-color="#8c8c8c"/></linearGradient></defs><path d="M1.6 3.6 Q1.6 0.6 7.6 0.6 Q13.8 0.6 13.8 3.6 V5.2 Q13.8 8 7.6 8 Q1.6 8 1.6 5.2 Z" fill="url(#dg)" stroke="#505050" stroke-width=".8"/><ellipse cx="7.7" cy="3.4" rx="5.4" ry="2.2" fill="#e8e8e8" stroke="#707070" stroke-width=".5"/><path d="M7.4 7.6 V10" stroke="#303030" stroke-width="1.6"/><path d="M0.6 11 H14.8" stroke="#1c2c44" stroke-width="2.4" stroke-linecap="round"/><path d="M1 10.4 H14.4" stroke="#8cc4ec" stroke-width=".8"/><rect x="5" y="8.4" width="5" height="4.6" rx=".8" fill="#f0b818" stroke="#a06c00" stroke-width=".7"/><rect x="6.4" y="9.6" width="2.2" height="2" fill="#fff4c0"/></svg>
<span class="t" style="left:21.00px;top:1067px;font-size:11px;line-height:12px;color:#000;transform:scaleX(0.8946);">Devices</span>
<svg style="left:64.6px;top:1064.8px;" width="13" height="15.4" viewBox="0 0 13 15.4"><path d="M1 3 H6.5 V12.5 H1 Z" fill="#fff" stroke="#b0b0b0" stroke-width=".8"/><path d="M3.4 1.6 H8.6 L12 5 V14.6 H3.4 Z" fill="#dcecfc" stroke="#404040" stroke-width="1"/><path d="M3.8 15 H12.4 V5.4" stroke="#505050" stroke-width="1" fill="none"/><path d="M7 0.6 L9.4 0.8 L12.4 4 L12 6 Z" fill="#2c78d8"/></svg>
<span class="t" style="left:82.00px;top:1067px;font-size:11px;line-height:12px;color:#6c6c6c;transform:scaleX(0.8351);">POUs</span>
<div style="left:2.5px;top:1085.5px;width:293.5px;height:19px;background:#f0f0f0;border:1px solid #6e6e6e;box-sizing:border-box;border-bottom:none;border-radius:3px 3px 0 0;"></div>
<svg style="left:7px;top:1089px;" width="11" height="12" viewBox="0 0 11 12"><rect x=".6" y=".6" width="9.8" height="10.4" fill="#fff" stroke="#404040" stroke-width="1.1"/><rect x=".4" y=".2" width="10.2" height="2.4" fill="#00007c"/><path d="M2.4 5 H8.6" stroke="#404040" stroke-width="1.2"/><path d="M2.4 7.2 H8.6" stroke="#9c9c9c" stroke-width="1.1"/></svg>
<span class="t" style="left:26.50px;top:1089px;font-size:11px;line-height:12px;color:#585858;transform:scaleX(0.9622);">Messages - Total 0 error(s), 0 warning(s), 11 message(s)</span>
<div style="left:1px;top:1104px;width:1816px;height:1px;background:#dcdcdc;"></div>
<div style="left:1273px;top:1106px;width:1px;height:16px;background:#d4d4d4;"></div>
<div style="left:1295px;top:1106px;width:1px;height:16px;background:#d4d4d4;"></div>
<div style="left:1536px;top:1106px;width:1px;height:16px;background:#d4d4d4;"></div>
<div style="left:1559px;top:1106px;width:1px;height:16px;background:#d4d4d4;"></div>
<div style="left:1779px;top:1106px;width:1px;height:16px;background:#d4d4d4;"></div>
<svg style="left:1277.5px;top:1107px;" width="14" height="11" viewBox="0 0 14 11"><path d="M3.5 9.5 Q0.8 9.5 0.8 7 Q0.8 4.8 3.2 4.6 Q3.6 1 7 1 Q10 1 10.6 4 Q13.2 4.2 13.2 6.8 Q13.2 9.5 10.5 9.5 Z" fill="#fff" stroke="#d81030" stroke-width="1"/><path d="M5 4.5 L9 8 M9 4.5 L5 8" stroke="#d81030" stroke-width="1"/></svg>
<span class="t" style="left:1324.50px;top:1108px;font-size:11px;line-height:12px;color:#000;transform:scaleX(0.9074);">Last build:</span>
<svg style="left:1376.5px;top:1109px;" width="11" height="11" viewBox="0 0 11 11"><circle cx="5.5" cy="5.5" r="5" fill="#e01818"/><path d="M3.3 3.3 L7.7 7.7 M7.7 3.3 L3.3 7.7" stroke="#fff" stroke-width="1.5"/></svg>
<span class="t" style="left:1391.50px;top:1108px;font-size:11px;line-height:12px;color:#000;transform:scaleX(0.9000);">0</span>
<svg style="left:1403px;top:1109px;" width="11" height="11" viewBox="0 0 11 11"><circle cx="5.5" cy="5.5" r="5" fill="#f4dc10" stroke="#a08800" stroke-width=".6"/><path d="M5.5 2.4 V6.2 M5.5 7.6 V8.8" stroke="#101010" stroke-width="1.5"/></svg>
<span class="t" style="left:1418.50px;top:1108px;font-size:11px;line-height:12px;color:#000;transform:scaleX(0.9000);">0</span>
<span class="t" style="left:1444.50px;top:1108px;font-size:11px;line-height:12px;color:#000;transform:scaleX(0.8633);">Precompile</span>
<svg style="left:1497px;top:1108.5px;" width="14" height="12" viewBox="0 0 14 12"><path d="M1 6.5 L5 10.5 L13 1.5" stroke="#1c9c1c" stroke-width="2.3" fill="none"/></svg>
<svg style="left:1540px;top:1106px;" width="17" height="17" viewBox="0 0 17 17"><g transform="translate(7,7)"><g fill="#8898b8"><rect x="-1.3" y="-6.4" width="2.6" height="3" transform="rotate(0)"/><rect x="-1.3" y="-6.4" width="2.6" height="3" transform="rotate(45)"/><rect x="-1.3" y="-6.4" width="2.6" height="3" transform="rotate(90)"/><rect x="-1.3" y="-6.4" width="2.6" height="3" transform="rotate(135)"/><rect x="-1.3" y="-6.4" width="2.6" height="3" transform="rotate(180)"/><rect x="-1.3" y="-6.4" width="2.6" height="3" transform="rotate(225)"/><rect x="-1.3" y="-6.4" width="2.6" height="3" transform="rotate(270)"/><rect x="-1.3" y="-6.4" width="2.6" height="3" transform="rotate(315)"/></g><circle r="4.6" fill="#8898b8"/><circle r="2" fill="#f0f0f0"/></g><circle cx="12.6" cy="3.6" r="2.4" fill="#20c030"/><rect x="8" y="9.5" width="7.5" height="6.5" fill="#e8f0ff" stroke="#203060" stroke-width="1"/><rect x="10" y="11.5" width="3.5" height="2.5" fill="#203060"/></svg>
<span class="t" style="left:1617.00px;top:1109px;font-size:11px;line-height:12px;color:#000;transform:scaleX(0.9887);">Project user: (nobody)</span>
<svg style="left:1784px;top:1106px;" width="13" height="16" viewBox="0 0 13 16"><path d="M6.5 0.8 L12 3 V8 Q11.5 12.6 6.5 15 Q1.5 12.6 1 8 V3 Z" fill="#f0e070" stroke="#605830" stroke-width="1"/><path d="M6.5 2 L6.5 14 Q10.5 12 11 8 V3.8 Z" fill="#a0a070"/><circle cx="6.5" cy="7" r="1.6" fill="#fff" stroke="#605830" stroke-width=".6"/></svg>
<div style="left:1813px;top:1112px;width:2px;height:2px;background:#bcbcbc;"></div>
<div style="left:1810px;top:1115px;width:2px;height:2px;background:#bcbcbc;"></div>
<div style="left:1813px;top:1115px;width:2px;height:2px;background:#bcbcbc;"></div>
<div style="left:1807px;top:1118px;width:2px;height:2px;background:#bcbcbc;"></div>
<div style="left:1810px;top:1118px;width:2px;height:2px;background:#bcbcbc;"></div>
<div style="left:1813px;top:1118px;width:2px;height:2px;background:#bcbcbc;"></div>
<div style="left:0px;top:0px;width:1818px;height:1.1px;background:#3c4356;"></div>
<div style="left:0px;top:0px;width:1.1px;height:1125px;background:#363c50;"></div>
<div style="left:1816.7px;top:0px;width:1.3px;height:1125px;background:#6c6c6c;"></div>
<div style="left:0px;top:1123.9px;width:1818px;height:1.1px;background:#444444;"></div>
</body></html>
